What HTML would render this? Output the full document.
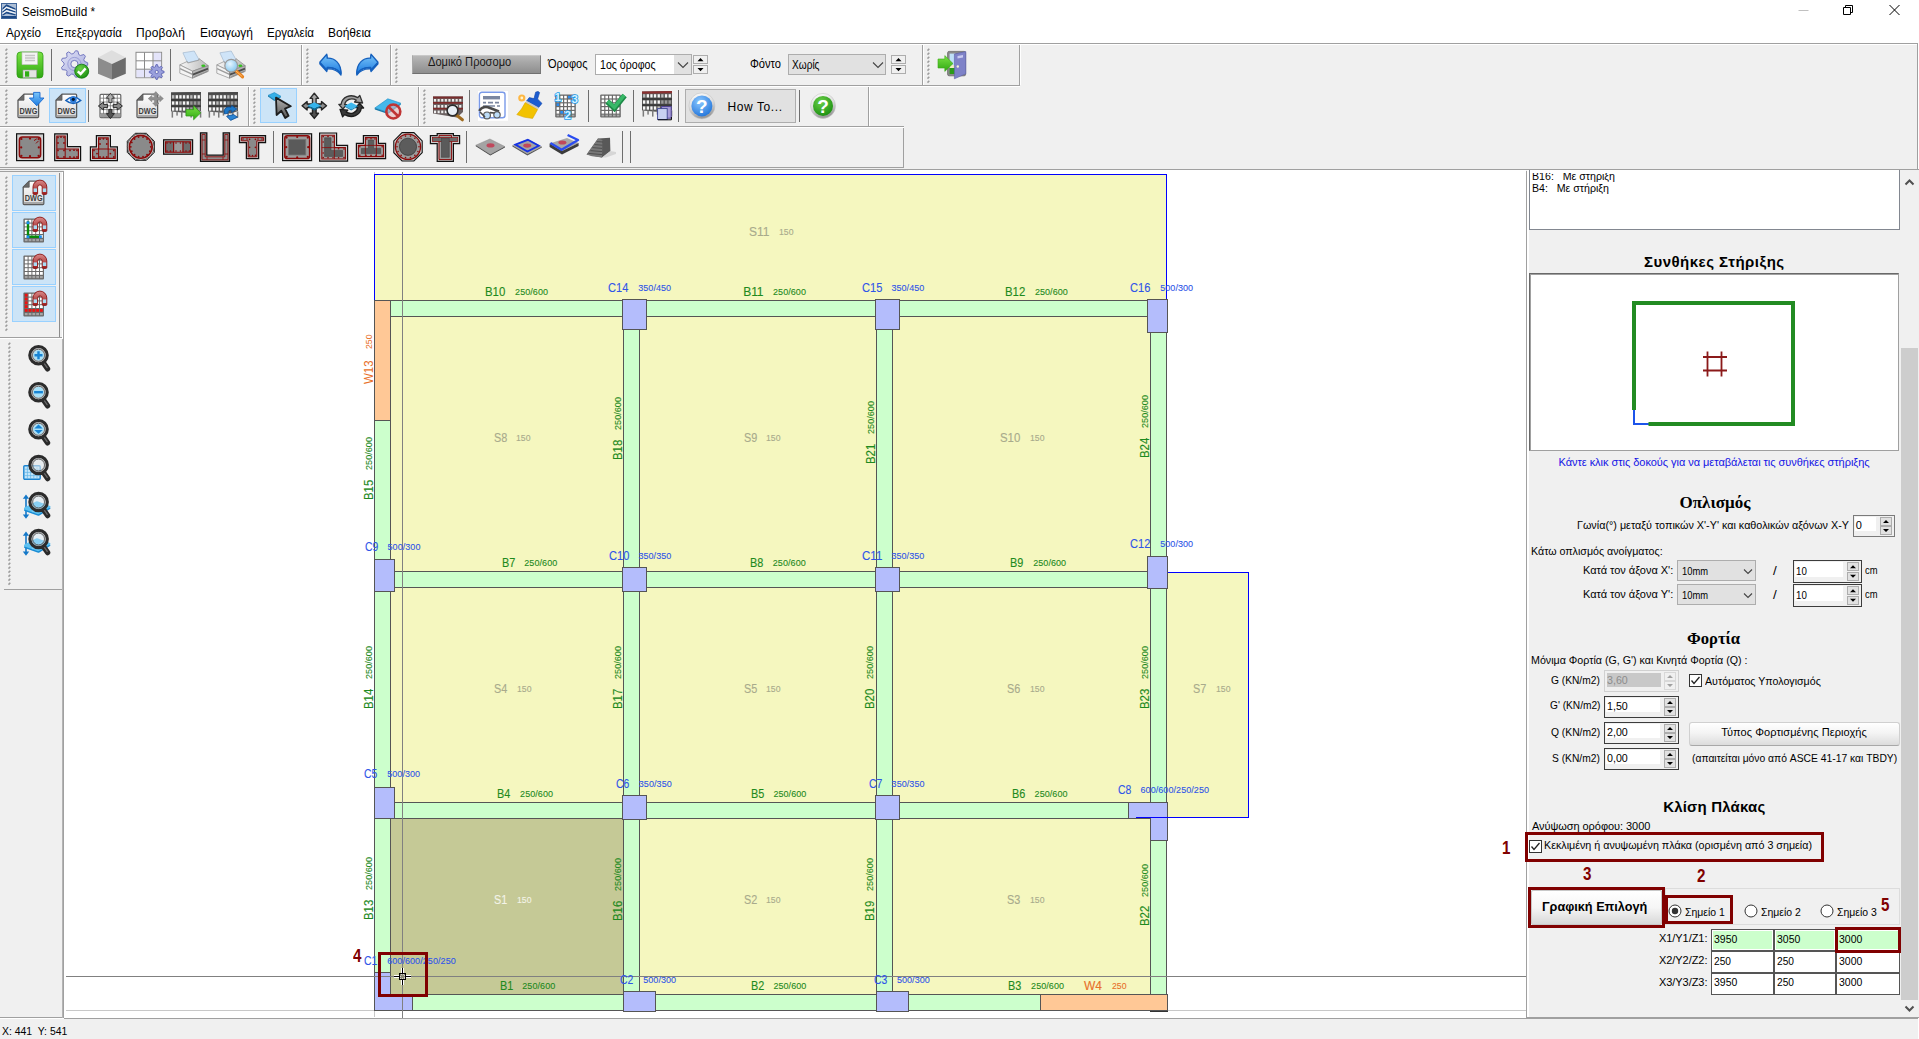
<!DOCTYPE html>
<html lang="el"><head><meta charset="utf-8"><title>SeismoBuild</title>
<style>
html,body{margin:0;padding:0}
body{width:1919px;height:1039px;overflow:hidden;background:#f0f0f0;position:relative;font-family:"Liberation Sans",sans-serif;font-size:11px;color:#000}
.a{position:absolute;box-sizing:border-box}
.t{position:absolute;white-space:pre;line-height:1;display:block}
svg{position:absolute;overflow:visible}
.tb{position:absolute;box-sizing:border-box;border-right:1px solid #a0a0a0;border-bottom:1px solid #a0a0a0;box-shadow:1px 1px 0 #fff}
.grip{position:absolute;width:3px;border-left:1px dotted #a8a8a8;border-right:1px dotted #c8c8c8}
.sep{position:absolute;width:1px;background:#a0a0a0;box-shadow:1px 0 0 #fff}
.hl{position:absolute;box-sizing:border-box;background:#cce4f7;border:1px solid #99d1ff}
.spin{position:absolute;box-sizing:border-box;background:#fff;border:1px solid #333}
.sb{position:absolute;box-sizing:border-box;background:#f0f0f0;border:1px solid #adadad}
.in{position:absolute;box-sizing:border-box;background:#fff;border:1px solid #7a7a7a}
.red{position:absolute;box-sizing:border-box;border:3px solid #800000}
</style></head>
<body>
<!-- title bar -->
<div class="a" style="left:0px;top:0px;width:1919px;height:43px;background:#fff"></div>
<svg style="left:1px;top:3px" width="16" height="16" viewBox="0 0 16 16">
<rect x="0.5" y="0.5" width="15" height="15" fill="#aebfd6" stroke="#41669a"/>
<path d="M1.5 5 L5.5 1.2 L14.5 5.4 V7 L5.5 3.4 L1.5 7 Z M1.5 8.2 L5.5 5 L14.5 8.2 V9.8 L5.5 7 L1.5 10 Z M1.5 11.2 L5.5 8.6 L14.5 11 V12.4 L5.5 10.4 L1.5 12.8 Z" fill="#1d4a87"/>
<path d="M1.5 7 L5.5 3.4 L14.5 7 V8.2 L5.5 5 L1.5 8.2 Z M1.5 10 L5.5 7 L14.5 9.8 V11 L5.5 8.6 L1.5 11.2 Z" fill="#f2f5f9"/>
<rect x="1" y="13" width="14" height="2" fill="#1d4a87"/>
</svg>
<span class="t" style="font-size:12px;color:#000;left:22px;top:5.84px;transform-origin:0 0;transform:scaleX(0.9772);">SeismoBuild *</span>
<svg style="left:1780px;top:0" width="139" height="22" viewBox="0 0 139 22">
<path d="M18.5 10.5 H28.5" stroke="#c0c0c0" stroke-width="1" fill="none"/>
<path d="M63.5 7.5 H70.5 V14.5 H63.5 Z M65.5 7.5 V5.5 H72.5 V12.5 H70.5" stroke="#000" stroke-width="1" fill="none"/>
<path d="M109.5 5 L119.5 15 M119.5 5 L109.5 15" stroke="#000" stroke-width="1" fill="none"/>
</svg>
<!-- menu -->
<span class="t" style="font-size:12px;color:#000;left:6px;top:26.84px;transform-origin:0 0;transform:scaleX(0.9769);">Αρχείο</span>
<span class="t" style="font-size:12px;color:#000;left:56px;top:26.84px;transform-origin:0 0;transform:scaleX(0.9546);">Επεξεργασία</span>
<span class="t" style="font-size:12px;color:#000;letter-spacing:0.116px;left:136px;top:26.84px;">Προβολή</span>
<span class="t" style="font-size:12px;color:#000;letter-spacing:-0.008px;left:200px;top:26.84px;">Εισαγωγή</span>
<span class="t" style="font-size:12px;color:#000;left:267px;top:26.84px;transform-origin:0 0;transform:scaleX(0.9644);">Εργαλεία</span>
<span class="t" style="font-size:12px;color:#000;left:328px;top:26.84px;">Βοήθεια</span>
<div class="a" style="left:0px;top:43px;width:1919px;height:1px;background:#a0a0a0"></div>
<div class="a" style="left:0px;top:44px;width:1919px;height:1px;background:#fff"></div>
<!-- status bar -->
<div class="a" style="left:0px;top:1019px;width:1919px;height:20px;background:#f0f0f0"></div>
<div class="a" style="left:0px;top:1018px;width:1919px;height:1px;background:#a0a0a0"></div>
<div class="a" style="left:0px;top:1018px;width:64px;height:1px;background:#fff"></div>
<span class="t" style="font-size:11px;color:#000;left:2px;top:1025.69px;transform-origin:0 0;transform:scaleX(0.9474);">X: 441  Y: 541</span>
<!-- toolbars -->
<div class="a" style="left:0px;top:85px;width:1020px;height:1px;background:#a0a0a0"></div>
<div class="a" style="left:0px;top:86px;width:1020px;height:1px;background:#fff"></div>
<div class="a" style="left:0px;top:126px;width:904px;height:1px;background:#a0a0a0"></div>
<div class="a" style="left:0px;top:127px;width:904px;height:1px;background:#fff"></div>
<div class="a" style="left:0px;top:167px;width:904px;height:1px;background:#a0a0a0"></div>
<div class="a" style="left:1917px;top:44px;width:1px;height:126px;background:#a0a0a0"></div>
<div class="a" style="left:1918px;top:22px;width:1px;height:1017px;background:#fff"></div>
<div class="a" style="left:0px;top:169px;width:1919px;height:1px;background:#a0a0a0"></div>
<div class="a" style="left:301px;top:45px;width:1px;height:41px;background:#a0a0a0"></div>
<div class="a" style="left:302px;top:45px;width:1px;height:40px;background:#fff"></div>
<div class="a" style="left:390px;top:45px;width:1px;height:41px;background:#a0a0a0"></div>
<div class="a" style="left:391px;top:45px;width:1px;height:40px;background:#fff"></div>
<div class="a" style="left:922px;top:45px;width:1px;height:41px;background:#a0a0a0"></div>
<div class="a" style="left:923px;top:45px;width:1px;height:40px;background:#fff"></div>
<div class="a" style="left:1019px;top:45px;width:1px;height:41px;background:#a0a0a0"></div>
<div class="a" style="left:1020px;top:45px;width:1px;height:40px;background:#fff"></div>
<div class="a" style="left:248px;top:87px;width:1px;height:40px;background:#a0a0a0"></div>
<div class="a" style="left:249px;top:87px;width:1px;height:39px;background:#fff"></div>
<div class="a" style="left:418px;top:87px;width:1px;height:40px;background:#a0a0a0"></div>
<div class="a" style="left:419px;top:87px;width:1px;height:39px;background:#fff"></div>
<div class="a" style="left:868px;top:87px;width:1px;height:40px;background:#a0a0a0"></div>
<div class="a" style="left:869px;top:87px;width:1px;height:39px;background:#fff"></div>
<div class="a" style="left:903px;top:128px;width:1px;height:40px;background:#a0a0a0"></div>
<svg style="left:5px;top:48px" width="4" height="35"><path d="M0.5 2.6 L2.3 0.8 M0.5 6.6 L2.3 4.8 M0.5 10.6 L2.3 8.8 M0.5 14.6 L2.3 12.8 M0.5 18.6 L2.3 16.8 M0.5 22.6 L2.3 20.8 M0.5 26.6 L2.3 24.8 M0.5 30.6 L2.3 28.8 M0.5 34.6 L2.3 32.8 " stroke="#9c9c9c" stroke-width="1.5" fill="none"/></svg>
<svg style="left:306px;top:48px" width="4" height="35"><path d="M0.5 2.6 L2.3 0.8 M0.5 6.6 L2.3 4.8 M0.5 10.6 L2.3 8.8 M0.5 14.6 L2.3 12.8 M0.5 18.6 L2.3 16.8 M0.5 22.6 L2.3 20.8 M0.5 26.6 L2.3 24.8 M0.5 30.6 L2.3 28.8 M0.5 34.6 L2.3 32.8 " stroke="#9c9c9c" stroke-width="1.5" fill="none"/></svg>
<svg style="left:395px;top:48px" width="4" height="35"><path d="M0.5 2.6 L2.3 0.8 M0.5 6.6 L2.3 4.8 M0.5 10.6 L2.3 8.8 M0.5 14.6 L2.3 12.8 M0.5 18.6 L2.3 16.8 M0.5 22.6 L2.3 20.8 M0.5 26.6 L2.3 24.8 M0.5 30.6 L2.3 28.8 M0.5 34.6 L2.3 32.8 " stroke="#9c9c9c" stroke-width="1.5" fill="none"/></svg>
<svg style="left:927px;top:48px" width="4" height="35"><path d="M0.5 2.6 L2.3 0.8 M0.5 6.6 L2.3 4.8 M0.5 10.6 L2.3 8.8 M0.5 14.6 L2.3 12.8 M0.5 18.6 L2.3 16.8 M0.5 22.6 L2.3 20.8 M0.5 26.6 L2.3 24.8 M0.5 30.6 L2.3 28.8 M0.5 34.6 L2.3 32.8 " stroke="#9c9c9c" stroke-width="1.5" fill="none"/></svg>
<svg style="left:5px;top:89px" width="4" height="35"><path d="M0.5 2.6 L2.3 0.8 M0.5 6.6 L2.3 4.8 M0.5 10.6 L2.3 8.8 M0.5 14.6 L2.3 12.8 M0.5 18.6 L2.3 16.8 M0.5 22.6 L2.3 20.8 M0.5 26.6 L2.3 24.8 M0.5 30.6 L2.3 28.8 M0.5 34.6 L2.3 32.8 " stroke="#9c9c9c" stroke-width="1.5" fill="none"/></svg>
<svg style="left:253px;top:89px" width="4" height="35"><path d="M0.5 2.6 L2.3 0.8 M0.5 6.6 L2.3 4.8 M0.5 10.6 L2.3 8.8 M0.5 14.6 L2.3 12.8 M0.5 18.6 L2.3 16.8 M0.5 22.6 L2.3 20.8 M0.5 26.6 L2.3 24.8 M0.5 30.6 L2.3 28.8 M0.5 34.6 L2.3 32.8 " stroke="#9c9c9c" stroke-width="1.5" fill="none"/></svg>
<svg style="left:423px;top:89px" width="4" height="35"><path d="M0.5 2.6 L2.3 0.8 M0.5 6.6 L2.3 4.8 M0.5 10.6 L2.3 8.8 M0.5 14.6 L2.3 12.8 M0.5 18.6 L2.3 16.8 M0.5 22.6 L2.3 20.8 M0.5 26.6 L2.3 24.8 M0.5 30.6 L2.3 28.8 M0.5 34.6 L2.3 32.8 " stroke="#9c9c9c" stroke-width="1.5" fill="none"/></svg>
<svg style="left:5px;top:130px" width="4" height="35"><path d="M0.5 2.6 L2.3 0.8 M0.5 6.6 L2.3 4.8 M0.5 10.6 L2.3 8.8 M0.5 14.6 L2.3 12.8 M0.5 18.6 L2.3 16.8 M0.5 22.6 L2.3 20.8 M0.5 26.6 L2.3 24.8 M0.5 30.6 L2.3 28.8 M0.5 34.6 L2.3 32.8 " stroke="#9c9c9c" stroke-width="1.5" fill="none"/></svg>
<div class="a" style="left:51px;top:49px;width:1px;height:32px;background:#6e6e6e"></div>
<div class="a" style="left:170px;top:49px;width:1px;height:32px;background:#6e6e6e"></div>
<div class="a" style="left:88px;top:90px;width:1px;height:32px;background:#6e6e6e"></div>
<div class="a" style="left:469px;top:90px;width:1px;height:32px;background:#6e6e6e"></div>
<div class="a" style="left:588px;top:90px;width:1px;height:32px;background:#6e6e6e"></div>
<div class="a" style="left:633px;top:90px;width:1px;height:32px;background:#6e6e6e"></div>
<div class="a" style="left:678px;top:90px;width:1px;height:32px;background:#6e6e6e"></div>
<div class="a" style="left:799px;top:90px;width:1px;height:32px;background:#6e6e6e"></div>
<div class="a" style="left:273px;top:131px;width:1px;height:32px;background:#6e6e6e"></div>
<div class="a" style="left:466px;top:131px;width:1px;height:32px;background:#6e6e6e"></div>
<div class="a" style="left:622px;top:131px;width:1px;height:32px;background:#6e6e6e"></div>
<div class="a" style="left:630px;top:131px;width:1px;height:32px;background:#6e6e6e"></div>
<div class="hl" style="left:49px;top:88px;width:37px;height:35px"></div>
<div class="hl" style="left:260px;top:88px;width:37px;height:35px"></div>
<div class="a" style="left:412px;top:55px;width:129px;height:19px;background:linear-gradient(#b8b8b8 0%,#a6a6a6 40%,#8e8e8e 100%);border-top:1px solid #c8c8c8;border-left:1px solid #a8a8a8;border-right:1px solid #787878;border-bottom:1px solid #707070"></div>
<span class="t" style="font-size:12px;color:#1a1a1a;left:428px;top:56.04px;transform-origin:0 0;transform:scaleX(0.9248);">Δομικό Προσομο</span>
<span class="t" style="font-size:12px;color:#000;left:548px;top:57.84px;transform-origin:0 0;transform:scaleX(0.9179);">Όροφος</span>
<div class="a" style="left:595px;top:54px;width:97px;height:21px;background:#fff;border:1px solid #adadad"></div>
<div class="a" style="left:674px;top:55px;width:17px;height:19px;background:#e1e1e1"></div>
<svg style="left:677px;top:61px" width="12" height="8"><path d="M1 1.5 L6 6.5 L11 1.5" stroke="#444" stroke-width="1.1" fill="none"/></svg>
<span class="t" style="font-size:12px;color:#000;left:600px;top:58.54px;transform-origin:0 0;transform:scaleX(0.8825);">1ος όροφος</span>
<div class="a" style="left:693px;top:55px;width:15px;height:9px;background:#f0f0f0;border:1px solid #adadad"></div>
<div class="a" style="left:693px;top:65px;width:15px;height:9px;background:#f0f0f0;border:1px solid #adadad"></div>
<svg style="left:693px;top:55px" width="15" height="19"><path d="M4.5 6.2 L7.5 3 L10.5 6.2 Z M4.5 13 L7.5 16.2 L10.5 13 Z" fill="#000"/></svg>
<span class="t" style="font-size:12px;color:#000;left:750px;top:57.84px;transform-origin:0 0;transform:scaleX(0.9254);">Φόντο</span>
<div class="a" style="left:788px;top:54px;width:98px;height:21px;background:#e1e1e1;border:1px solid #adadad"></div>
<svg style="left:872px;top:61px" width="12" height="8"><path d="M1 1.5 L6 6.5 L11 1.5" stroke="#444" stroke-width="1.1" fill="none"/></svg>
<span class="t" style="font-size:12px;color:#000;left:791.7px;top:58.54px;transform-origin:0 0;transform:scaleX(0.8421);">Χωρίς</span>
<div class="a" style="left:891px;top:55px;width:15px;height:9px;background:#f0f0f0;border:1px solid #adadad"></div>
<div class="a" style="left:891px;top:65px;width:15px;height:9px;background:#f0f0f0;border:1px solid #adadad"></div>
<svg style="left:891px;top:55px" width="15" height="19"><path d="M4.5 6.2 L7.5 3 L10.5 6.2 Z M4.5 13 L7.5 16.2 L10.5 13 Z" fill="#000"/></svg>
<div class="a" style="left:685px;top:89px;width:111px;height:34px;background:#e1e1e1;border:1px solid #adadad"></div>
<span class="t" style="font-size:12px;color:#000;letter-spacing:0.610px;left:727.4px;top:100.74px;">How To...</span>
<svg style="left:0;top:0" width="1100" height="170"><defs>
<linearGradient id="gGreen" x1="0" y1="0" x2="0" y2="1"><stop offset="0" stop-color="#7be244"/><stop offset="1" stop-color="#2fa812"/></linearGradient>
<linearGradient id="gBlue" x1="0" y1="0" x2="0" y2="1"><stop offset="0" stop-color="#7cc6fa"/><stop offset="1" stop-color="#1c7be0"/></linearGradient>
<linearGradient id="gDoc" x1="0" y1="0" x2="0" y2="1"><stop offset="0" stop-color="#ffffff"/><stop offset="1" stop-color="#d8d8d8"/></linearGradient>
<linearGradient id="gGray" x1="0" y1="0" x2="0" y2="1"><stop offset="0" stop-color="#b0b0b0"/><stop offset="1" stop-color="#585858"/></linearGradient>
<radialGradient id="gLens" cx="0.4" cy="0.35" r="0.7"><stop offset="0" stop-color="#e8f6ff"/><stop offset="1" stop-color="#7fc4ee"/></radialGradient>
<radialGradient id="gQb" cx="0.4" cy="0.3" r="0.8"><stop offset="0" stop-color="#8cc8ff"/><stop offset="1" stop-color="#1a6fd8"/></radialGradient>
<radialGradient id="gQg" cx="0.4" cy="0.3" r="0.8"><stop offset="0" stop-color="#6cd048"/><stop offset="1" stop-color="#138a0c"/></radialGradient>
<linearGradient id="gMag" x1="0" y1="0" x2="0" y2="1"><stop offset="0" stop-color="#d88a8a"/><stop offset="1" stop-color="#9c1c1c"/></linearGradient>
<linearGradient id="gGear" x1="0" y1="0" x2="1" y2="1"><stop offset="0" stop-color="#e0e2f6"/><stop offset="1" stop-color="#a4a8dc"/></linearGradient>
<linearGradient id="gPr" x1="0" y1="0" x2="1" y2="0"><stop offset="0" stop-color="#f8f8f8"/><stop offset="1" stop-color="#b8b8b8"/></linearGradient>
<linearGradient id="gRing" x1="0" y1="0" x2="0.3" y2="1"><stop offset="0" stop-color="#ffffff"/><stop offset="0.55" stop-color="#dcdcdc"/><stop offset="1" stop-color="#9a9a9a"/></linearGradient>
</defs><g transform="translate(14,49)"><rect x="3" y="3" width="26" height="26" rx="3.5" fill="url(#gGreen)" stroke="#2c9a12" stroke-width="0.8"/><rect x="8" y="3.4" width="15.5" height="12.2" fill="#f4f4f4" stroke="#bdbdbd" stroke-width="0.6"/><path d="M11 6.5 H21 M11 9 H21 M11 11.5 H21" stroke="#c4c4c4" stroke-width="1.3"/><rect x="9" y="21" width="13.6" height="7.6" fill="#e4e4e4" stroke="#9a9a9a" stroke-width="0.6"/><rect x="11" y="22.3" width="4.2" height="5.4" fill="#2fae14"/></g>
<g transform="translate(59,49)"><polygon points="28.7,13.8 28.7,16.2 25.4,17.7 24.8,19.4 26.4,22.7 24.9,24.5 21.4,23.5 19.8,24.4 18.9,27.9 16.6,28.3 14.5,25.4 12.7,25.0 9.7,27.1 7.7,26.0 8.0,22.4 6.9,21.0 3.3,20.7 2.5,18.5 5.0,15.9 5.0,14.1 2.5,11.5 3.3,9.3 6.9,9.0 8.0,7.6 7.7,4.0 9.7,2.9 12.7,5.0 14.5,4.6 16.6,1.7 18.9,2.1 19.8,5.6 21.4,6.5 24.9,5.5 26.4,7.3 24.8,10.6 25.4,12.3" fill="url(#gGear)" stroke="#7478c0" stroke-width="1" stroke-linejoin="round"/><circle cx="15.4" cy="15" r="6.6" fill="none" stroke="#9a9ed8" stroke-width="1"/><circle cx="15.4" cy="15" r="3.6" fill="#f0f0f0" stroke="#7478c0" stroke-width="1"/><circle cx="22.7" cy="22.2" r="7" fill="url(#gQg)" stroke="#0d7a0a" stroke-width="0.8"/><path d="M18.8 22.4 L21.6 25 L26.6 19.4" stroke="#fff" stroke-width="2.4" fill="none"/></g>
<g transform="translate(96,49)"><polygon points="15.7,1.3 29.8,8.4 16,15 2,8.4" fill="#dedede"/><polygon points="2,8.4 16,15 16,30.5 2,24.7" fill="#8c8c8c"/><polygon points="16,15 29.8,8.4 29.8,24.7 16,30.5" fill="#6c6c6c"/></g>
<g transform="translate(133,49)"><rect x="3" y="3.3" width="25.6" height="25.4" fill="#fff" stroke="#8a8a8a" stroke-width="1"/><rect x="20.6" y="3.8" width="7.5" height="24.4" fill="#e4e4fa"/><rect x="3.5" y="20.4" width="24.6" height="7.8" fill="#e4e4fa"/><path d="M11.5 3.3 V28.7 M20 3.3 V28.7 M3 11.8 H28.6 M3 20.2 H28.6" stroke="#8a8a8a" stroke-width="1"/><polygon points="31.1,22.3 31.1,23.7 28.7,24.5 28.3,25.5 29.4,27.7 28.4,28.7 26.2,27.6 25.2,28.0 24.4,30.4 23.0,30.4 22.2,28.0 21.2,27.6 19.0,28.7 18.0,27.7 19.1,25.5 18.7,24.5 16.3,23.7 16.3,22.3 18.7,21.5 19.1,20.5 18.0,18.3 19.0,17.3 21.2,18.4 22.2,18.0 23.0,15.6 24.4,15.6 25.2,18.0 26.2,18.4 28.4,17.3 29.4,18.3 28.3,20.5 28.7,21.5" fill="#9aa0dc" stroke="#555cb0" stroke-width="0.8" stroke-linejoin="round"/><circle cx="23.7" cy="23" r="1.6" fill="#f0f0f0" stroke="#555cb0" stroke-width="0.8"/></g>
<g transform="translate(178,49)"><polygon points="4.9,3.8 16.2,2 21.2,10.9 9.5,13.8" fill="#cfe4f8" stroke="#9ab0c8" stroke-width="0.6"/><polygon points="1.8,15.9 9.3,12.4 9.8,14 20.8,11.2 21,9.6 30.2,16.6 14.5,22.2" fill="url(#gPr)" stroke="#8e8e8e" stroke-width="0.7"/><polygon points="1.8,15.9 14.5,22.2 14.5,29.2 1.8,24.2" fill="#f4f4f4" stroke="#8e8e8e" stroke-width="0.7"/><polygon points="14.5,22.2 30.2,16.6 30.2,22.4 14.5,29.2" fill="#b4b4b4" stroke="#808080" stroke-width="0.7"/><path d="M2 19.6 L14.5 25.4" stroke="#9c9c9c" stroke-width="1.4" fill="none"/><path d="M14.8 25.6 L30 19.6" stroke="#4c4c4c" stroke-width="1.8" fill="none"/><path d="M16.4 27.6 L29 22.4" stroke="#8a8a8a" stroke-width="0.9" fill="none"/><ellipse cx="25.3" cy="16.7" rx="2" ry="1.2" fill="#35c020"/></g>
<g transform="translate(215,49)"><polygon points="4.9,3.8 16.2,2 21.2,10.9 9.5,13.8" fill="#cfe4f8" stroke="#9ab0c8" stroke-width="0.6"/><polygon points="1.8,15.9 9.3,12.4 9.8,14 20.8,11.2 21,9.6 30.2,16.6 14.5,22.2" fill="url(#gPr)" stroke="#8e8e8e" stroke-width="0.7"/><polygon points="1.8,15.9 14.5,22.2 14.5,29.2 1.8,24.2" fill="#f4f4f4" stroke="#8e8e8e" stroke-width="0.7"/><polygon points="14.5,22.2 30.2,16.6 30.2,22.4 14.5,29.2" fill="#b4b4b4" stroke="#808080" stroke-width="0.7"/><path d="M2 19.6 L14.5 25.4" stroke="#9c9c9c" stroke-width="1.4" fill="none"/><path d="M14.8 25.6 L30 19.6" stroke="#4c4c4c" stroke-width="1.8" fill="none"/><path d="M16.4 27.6 L29 22.4" stroke="#8a8a8a" stroke-width="0.9" fill="none"/><ellipse cx="25.3" cy="16.7" rx="2" ry="1.2" fill="#35c020"/></g>
<g transform="translate(215,49)"><path d="M19.5 20.5 L27.5 27.8" stroke="#e8801c" stroke-width="3.2" stroke-linecap="round"/><path d="M20.5 21.5 L27 27.3" stroke="#ffc070" stroke-width="1" stroke-linecap="round"/><circle cx="16.2" cy="16.7" r="6.4" fill="url(#gLens)" stroke="#9a9a9a" stroke-width="1.2"/></g>
<g transform="translate(319.8,54)"><path d="M0 8.2 L7 0.2 L7.4 4.2 C15 3.8 21.4 9.2 21.2 19.6 C17.6 14.6 14 13 7.4 13.4 L7 16 Z" transform="translate(0,1.5)" fill="#1560bd" stroke="#1560bd" stroke-width="1.3" stroke-linejoin="round"/><path d="M0 8.2 L7 0.2 L7.4 4.2 C15 3.8 21.4 9.2 21.2 19.6 C17.6 14.6 14 13 7.4 13.4 L7 16 Z" fill="url(#gBlue)" stroke="#1560bd" stroke-width="1.3" stroke-linejoin="round"/></g>
<g transform="translate(378,54) scale(-1,1)"><path d="M0 8.2 L7 0.2 L7.4 4.2 C15 3.8 21.4 9.2 21.2 19.6 C17.6 14.6 14 13 7.4 13.4 L7 16 Z" transform="translate(0,1.5)" fill="#1560bd" stroke="#1560bd" stroke-width="1.3" stroke-linejoin="round"/><path d="M0 8.2 L7 0.2 L7.4 4.2 C15 3.8 21.4 9.2 21.2 19.6 C17.6 14.6 14 13 7.4 13.4 L7 16 Z" fill="url(#gBlue)" stroke="#1560bd" stroke-width="1.3" stroke-linejoin="round"/></g>
<g transform="translate(936,49)"><rect x="11.6" y="2.4" width="18" height="24.4" rx="1.5" fill="#8a8a8a" stroke="#6a6a6a" stroke-width="0.8"/><rect x="13.6" y="4.6" width="6" height="12" fill="#bfe0f8"/><rect x="13.6" y="16" width="6" height="3" fill="#f0f0c0"/><rect x="13.6" y="19" width="6" height="6" fill="#2a9a18"/><polygon points="18.4,5 29.8,2.6 29.8,24.8 18.4,29.8" fill="#7e82c8" stroke="#5a5ea8" stroke-width="0.6"/><rect x="21.5" y="6.5" width="5.5" height="2.6" fill="#c8caf0" transform="skewY(-10) translate(0,4.2)"/><circle cx="21.8" cy="17.5" r="1.2" fill="#f4f0d8"/><polygon points="2,10 8.8,10 8.8,6.6 17,14.5 8.8,22.4 8.8,19 2,19" fill="url(#gGreen)" stroke="#3aa818" stroke-width="0.6"/></g>
<g transform="translate(14,90)"><path d="M10 4.2 H23.6 Q24.6 4.2 24.6 5.2 V26.6 Q24.6 27.6 23.6 27.6 H5 Q4 27.6 4 26.6 V10.2 Z" fill="url(#gDoc)" stroke="#5a5a5a" stroke-width="1.3" stroke-linejoin="round"/><path d="M10 4.2 V10.2 H4 Z" fill="#6a6a6a" stroke="#5a5a5a" stroke-width="0.8" stroke-linejoin="round"/><rect x="4.7" y="25" width="19.2" height="2" fill="#a8a8a8"/><text x="14.5" y="23.6" font-family="Liberation Sans, sans-serif" font-size="9.6" font-weight="bold" text-anchor="middle" fill="#3e3e3e" textLength="17.8" lengthAdjust="spacingAndGlyphs">DWG</text></g>
<g transform="translate(14,90)"><path d="M19.6 2.4 H26 V8 H30 L22.8 15.8 L15.4 8 H19.6 Z" fill="url(#gBlue)" stroke="#1a6ad0" stroke-width="0.9" stroke-linejoin="round"/></g>
<g transform="translate(52,90)"><path d="M10 4.2 H23.6 Q24.6 4.2 24.6 5.2 V26.6 Q24.6 27.6 23.6 27.6 H5 Q4 27.6 4 26.6 V10.2 Z" fill="url(#gDoc)" stroke="#5a5a5a" stroke-width="1.3" stroke-linejoin="round"/><path d="M10 4.2 V10.2 H4 Z" fill="#6a6a6a" stroke="#5a5a5a" stroke-width="0.8" stroke-linejoin="round"/><rect x="4.7" y="25" width="19.2" height="2" fill="#a8a8a8"/><text x="14.5" y="23.6" font-family="Liberation Sans, sans-serif" font-size="9.6" font-weight="bold" text-anchor="middle" fill="#3e3e3e" textLength="17.8" lengthAdjust="spacingAndGlyphs">DWG</text></g>
<g transform="translate(52,90)"><path d="M13.8 10.4 Q21.3 3.4 28.8 10.4 Q21.3 16.6 13.8 10.4 Z" fill="#e8f4ff" stroke="#1560b8" stroke-width="1.4"/><circle cx="21.3" cy="9.6" r="3.4" fill="#2a7ad8"/><circle cx="21.3" cy="9.3" r="1.6" fill="#061830"/></g>
<g transform="translate(94,90)"><rect x="6" y="4.4" width="20.8" height="23.2" rx="1" fill="#fff" stroke="#666" stroke-width="1.2"/><path d="M9.5 4.4 V27.6 M13 4.4 V27.6 M16.4 4.4 V27.6 M19.8 4.4 V27.6 M23.3 4.4 V27.6 M6 8.2 H26.8 M6 12 H26.8 M6 15.8 H26.8 M6 19.6 H26.8 M6 23.4 H26.8" stroke="#777" stroke-width="0.8"/><rect x="6.5" y="24" width="19.8" height="3.2" fill="#9a9a9a"/><path d="M16.4 3.4 L20.4 8.2 H18 V12.6 H14.8 V8.2 H12.4 Z" fill="#b0b0b0" stroke="#3a3a3a" stroke-width="1"/><path d="M16.4 28.6 L20.4 23.6 H18 V19.4 H14.8 V23.6 H12.4 Z" fill="#555" stroke="#2a2a2a" stroke-width="1"/><path d="M4.4 16 L9.6 12 V14.4 H13.6 V17.6 H9.6 V20 Z" fill="#8a8a8a" stroke="#2a2a2a" stroke-width="1"/><path d="M28.4 16 L23.2 12 V14.4 H19.2 V17.6 H23.2 V20 Z" fill="#8a8a8a" stroke="#2a2a2a" stroke-width="1"/></g>
<g transform="translate(133,90)"><path d="M10 4.2 H23.6 Q24.6 4.2 24.6 5.2 V26.6 Q24.6 27.6 23.6 27.6 H5 Q4 27.6 4 26.6 V10.2 Z" fill="url(#gDoc)" stroke="#5a5a5a" stroke-width="1.3" stroke-linejoin="round"/><path d="M10 4.2 V10.2 H4 Z" fill="#6a6a6a" stroke="#5a5a5a" stroke-width="0.8" stroke-linejoin="round"/><rect x="4.7" y="25" width="19.2" height="2" fill="#a8a8a8"/><text x="14.5" y="23.6" font-family="Liberation Sans, sans-serif" font-size="9.6" font-weight="bold" text-anchor="middle" fill="#3e3e3e" textLength="17.8" lengthAdjust="spacingAndGlyphs">DWG</text></g>
<g transform="translate(133,90)"><path d="M22.8 1.6 L26 5.2 H24.2 V7.2 H26.8 V5.4 L30.4 8.6 L26.8 11.8 V10 H24.2 V13 H26 L22.8 16.4 L19.6 13 H21.4 V10 H18.8 V11.8 L15.2 8.6 L18.8 5.4 V7.2 H21.4 V5.2 H19.6 Z" fill="#8e8e8e" stroke="#7a7a7a" stroke-width="0.5"/></g>
<g transform="translate(171,92)"><polygon points="0,0.6 30,0 30,19 23,21.4 0,19.6" fill="#585858"/><polygon points="0,0.6 30,0 30,2.2 0,2.8" fill="#4a4a4a"/><rect x="1.0" y="3.2" width="2.3" height="3.3" fill="#bdbdbd"/><rect x="4.7" y="3.2" width="2.3" height="3.3" fill="#f6f6f6"/><rect x="8.3" y="3.2" width="2.3" height="3.3" fill="#f6f6f6"/><rect x="11.9" y="3.2" width="2.3" height="3.3" fill="#f6f6f6"/><rect x="15.6" y="3.2" width="2.3" height="3.3" fill="#f6f6f6"/><rect x="19.2" y="3.2" width="2.3" height="3.3" fill="#bdbdbd"/><rect x="22.9" y="3.2" width="2.3" height="3.3" fill="#f6f6f6"/><rect x="26.6" y="3.2" width="2.3" height="3.3" fill="#f6f6f6"/><rect x="1.0" y="9.4" width="2.3" height="3.3" fill="#f6f6f6"/><rect x="4.7" y="9.4" width="2.3" height="3.3" fill="#f6f6f6"/><rect x="8.3" y="9.4" width="2.3" height="3.3" fill="#bdbdbd"/><rect x="11.9" y="9.4" width="2.3" height="3.3" fill="#f6f6f6"/><rect x="15.6" y="9.4" width="2.3" height="3.3" fill="#f6f6f6"/><rect x="19.2" y="9.4" width="2.3" height="3.3" fill="#9a9a9a"/><rect x="22.9" y="9.4" width="2.3" height="3.3" fill="#9a9a9a"/><rect x="26.6" y="9.4" width="2.3" height="3.3" fill="#9a9a9a"/><rect x="1.0" y="15.4" width="2.3" height="3.3" fill="#f6f6f6"/><rect x="4.7" y="15.4" width="2.3" height="3.3" fill="#f6f6f6"/><rect x="8.3" y="15.4" width="2.3" height="3.3" fill="#f6f6f6"/><rect x="11.9" y="15.4" width="2.3" height="3.3" fill="#f6f6f6"/><rect x="15.6" y="15.4" width="2.3" height="3.3" fill="#bdbdbd"/><rect x="19.2" y="15.4" width="2.3" height="3.3" fill="#9a9a9a"/><rect x="22.9" y="15.4" width="2.3" height="3.3" fill="#9a9a9a"/><rect x="26.6" y="15.4" width="2.3" height="3.3" fill="#9a9a9a"/><path d="M0 8 H30 M0 14.2 H30" stroke="#3a3a3a" stroke-width="1.8"/><rect x="0.6" y="19.4" width="1.5" height="6.2" fill="#7c7c7c"/><rect x="5.3" y="19.4" width="1.5" height="4.2" fill="#7c7c7c"/><rect x="10.0" y="19.4" width="1.5" height="6.2" fill="#7c7c7c"/><rect x="14.7" y="19.4" width="1.5" height="4.2" fill="#7c7c7c"/><rect x="19.4" y="19.4" width="1.5" height="6.2" fill="#7c7c7c"/><rect x="24.1" y="19.4" width="1.5" height="4.2" fill="#7c7c7c"/><rect x="28.8" y="19.4" width="1.5" height="6.2" fill="#7c7c7c"/></g>
<g transform="translate(171,90)"><polygon points="15,19.6 22.6,19.6 22.6,15.8 29.8,22.8 22.6,29.8 22.6,26 15,26" fill="url(#gGreen)" stroke="#2a9a12" stroke-width="0.7"/></g>
<g transform="translate(208,92)"><polygon points="0,0.6 30,0 30,19 23,21.4 0,19.6" fill="#585858"/><polygon points="0,0.6 30,0 30,2.2 0,2.8" fill="#4a4a4a"/><rect x="1.0" y="3.2" width="2.3" height="3.3" fill="#bdbdbd"/><rect x="4.7" y="3.2" width="2.3" height="3.3" fill="#f6f6f6"/><rect x="8.3" y="3.2" width="2.3" height="3.3" fill="#f6f6f6"/><rect x="11.9" y="3.2" width="2.3" height="3.3" fill="#f6f6f6"/><rect x="15.6" y="3.2" width="2.3" height="3.3" fill="#f6f6f6"/><rect x="19.2" y="3.2" width="2.3" height="3.3" fill="#bdbdbd"/><rect x="22.9" y="3.2" width="2.3" height="3.3" fill="#f6f6f6"/><rect x="26.6" y="3.2" width="2.3" height="3.3" fill="#f6f6f6"/><rect x="1.0" y="9.4" width="2.3" height="3.3" fill="#f6f6f6"/><rect x="4.7" y="9.4" width="2.3" height="3.3" fill="#f6f6f6"/><rect x="8.3" y="9.4" width="2.3" height="3.3" fill="#bdbdbd"/><rect x="11.9" y="9.4" width="2.3" height="3.3" fill="#f6f6f6"/><rect x="15.6" y="9.4" width="2.3" height="3.3" fill="#f6f6f6"/><rect x="19.2" y="9.4" width="2.3" height="3.3" fill="#9a9a9a"/><rect x="22.9" y="9.4" width="2.3" height="3.3" fill="#9a9a9a"/><rect x="26.6" y="9.4" width="2.3" height="3.3" fill="#9a9a9a"/><rect x="1.0" y="15.4" width="2.3" height="3.3" fill="#f6f6f6"/><rect x="4.7" y="15.4" width="2.3" height="3.3" fill="#f6f6f6"/><rect x="8.3" y="15.4" width="2.3" height="3.3" fill="#f6f6f6"/><rect x="11.9" y="15.4" width="2.3" height="3.3" fill="#f6f6f6"/><rect x="15.6" y="15.4" width="2.3" height="3.3" fill="#bdbdbd"/><rect x="19.2" y="15.4" width="2.3" height="3.3" fill="#9a9a9a"/><rect x="22.9" y="15.4" width="2.3" height="3.3" fill="#9a9a9a"/><rect x="26.6" y="15.4" width="2.3" height="3.3" fill="#9a9a9a"/><path d="M0 8 H30 M0 14.2 H30" stroke="#3a3a3a" stroke-width="1.8"/><rect x="0.6" y="19.4" width="1.5" height="6.2" fill="#7c7c7c"/><rect x="5.3" y="19.4" width="1.5" height="4.2" fill="#7c7c7c"/><rect x="10.0" y="19.4" width="1.5" height="6.2" fill="#7c7c7c"/><rect x="14.7" y="19.4" width="1.5" height="4.2" fill="#7c7c7c"/><rect x="19.4" y="19.4" width="1.5" height="6.2" fill="#7c7c7c"/><rect x="24.1" y="19.4" width="1.5" height="4.2" fill="#7c7c7c"/><rect x="28.8" y="19.4" width="1.5" height="6.2" fill="#7c7c7c"/></g>
<g transform="translate(208,90)"><path d="M16.5 24 C15 18 19.5 16.2 23 17.4 L23.6 15.6 L28.8 19 L23.6 22.6 L23.8 20.4 C21.6 19.8 19.8 20.6 20.2 23.2 Z" fill="#1c78c8" stroke="#0c4c94" stroke-width="0.8"/><path d="M18.6 26.2 L25.6 24.6 L29.6 27.2 L22.6 30.4 Z" fill="#2a84d4" stroke="#0c4c94" stroke-width="0.8"/></g>
<g transform="translate(262,90)"><polygon points="6,5.4 12.4,2.6 18.8,6.2 12.4,9.8" fill="#36b0e8" stroke="#1a86c0" stroke-width="0.6"/><polygon points="6,5.4 12.4,9.8 12.4,11 6,6.6" fill="#1678a8"/><polygon points="12.4,9.8 18.8,6.2 18.8,7.4 12.4,11" fill="#1c8ac0"/><path d="M14 7.6 L28.8 16.2 L23 18.6 L26.6 25.8 L23.2 28 L19.4 20.8 L14.6 25 Z" fill="url(#gGray)" stroke="#1e1e1e" stroke-width="1.8" stroke-linejoin="round"/></g>
<g transform="translate(314.3,105.8)"><path d="M0 -12.6 L4.2 -7.4 H1.8 V-2 H-1.8 V-7.4 H-4.2 Z" fill="#a8a8a8" stroke="#2c2c2c" stroke-width="1.4" stroke-linejoin="round"/><path d="M0 12.6 L4.2 7.4 H1.8 V2 H-1.8 V7.4 H-4.2 Z" fill="#505050" stroke="#222" stroke-width="1.4" stroke-linejoin="round"/><path d="M-12.2 0 L-7.2 -4.2 V-1.8 H-2 V1.8 H-7.2 V4.2 Z" fill="#8c8c8c" stroke="#222" stroke-width="1.4" stroke-linejoin="round"/><path d="M12.2 0 L7.2 -4.2 V-1.8 H2 V1.8 H7.2 V4.2 Z" fill="#8c8c8c" stroke="#222" stroke-width="1.4" stroke-linejoin="round"/><polygon points="-6.4,-0.4 0,-3.6 6.4,-0.4 0,3" fill="#34b4ec"/><polygon points="-6.4,-0.4 0,3 6.4,-0.4 6.4,1 0,4.6 -6.4,1" fill="#0c6c98"/></g>
<g transform="translate(351.2,106)"><path d="M-10.2 -1.6 C-9 -9 -1 -12.6 6.6 -8.4 L8.6 -10.6 L11.4 -3 L3.4 -4 L5 -6 C0 -8.6 -5.6 -6.6 -6.6 -1.4 L-4.4 -1.4 L-8.4 3 L-12.4 -1.6 Z" fill="#a0a0a0" stroke="#303030" stroke-width="1.3" stroke-linejoin="round"/><path d="M10.2 2 C9 9.4 1 12.8 -6.6 8.6 L-8.6 10.8 L-11.2 3.4 L-3.4 4.2 L-5 6.2 C0 8.8 5.6 6.8 6.6 1.6 L4.4 1.6 L8.4 -2.8 L12.4 2 Z" fill="#3a3a3a" stroke="#1c1c1c" stroke-width="1.3" stroke-linejoin="round"/><polygon points="-6.4,-0.2 0,-3.4 6.4,-0.2 0,3.2" fill="#3cb8ee"/><polygon points="-6.4,-0.2 0,3.2 6.4,-0.2 6.4,0.8 0,4.4 -6.4,0.8" fill="#1a86b8"/></g>
<g transform="translate(374,90)"><polygon points="0.8,18 13.8,8.8 26.8,13.2 14,22.4" fill="#44b8ec" stroke="#1a8cc4" stroke-width="0.6"/><polygon points="0.8,18 14,22.4 14,24 0.8,19.6" fill="#1a7aa8"/><polygon points="14,22.4 26.8,13.2 26.8,14.8 14,24" fill="#1e8cc0"/><circle cx="19.3" cy="21.5" r="7" fill="#e8b4b4" fill-opacity="0.55" stroke="#c03434" stroke-width="2.6"/><path d="M14.4 16.8 L24.2 26.2" stroke="#c03434" stroke-width="2.6"/></g>
<g transform="translate(433,94)"><polygon points="0,2.5 30,2.5 30,18 24,23.4 0,19.4" fill="#6a6060"/><rect x="0" y="2.5" width="30" height="2" fill="#7a2c2c"/><path d="M0 8.8 H30 M0 14.6 H30" stroke="#7c2a2a" stroke-width="1.8"/><rect x="1.0" y="5" width="2.1" height="2.6" fill="#eee"/><rect x="1.0" y="11" width="2.1" height="2.6" fill="#eee"/><rect x="1.0" y="16.6" width="2.1" height="2.6" fill="#eee"/><rect x="4.6" y="5" width="2.1" height="2.6" fill="#eee"/><rect x="4.6" y="11" width="2.1" height="2.6" fill="#eee"/><rect x="4.6" y="16.6" width="2.1" height="2.6" fill="#eee"/><rect x="8.2" y="5" width="2.1" height="2.6" fill="#eee"/><rect x="8.2" y="11" width="2.1" height="2.6" fill="#eee"/><rect x="8.2" y="16.6" width="2.1" height="2.6" fill="#eee"/><rect x="11.8" y="5" width="2.1" height="2.6" fill="#eee"/><rect x="11.8" y="11" width="2.1" height="2.6" fill="#eee"/><rect x="11.8" y="16.6" width="2.1" height="2.6" fill="#eee"/><rect x="15.4" y="5" width="2.1" height="2.6" fill="#eee"/><rect x="15.4" y="11" width="2.1" height="2.6" fill="#eee"/><rect x="19.0" y="5" width="2.1" height="2.6" fill="#eee"/><rect x="19.0" y="11" width="2.1" height="2.6" fill="#eee"/><rect x="22.6" y="5" width="2.1" height="2.6" fill="#eee"/><rect x="22.6" y="11" width="2.1" height="2.6" fill="#eee"/><rect x="26.2" y="5" width="2.1" height="2.6" fill="#eee"/><rect x="26.2" y="11" width="2.1" height="2.6" fill="#eee"/><path d="M23 20.8 L29.4 25.8" stroke="#a06c20" stroke-width="3" stroke-linecap="round"/><circle cx="19.5" cy="16.5" r="5.4" fill="#e8eef4" stroke="#2c2c2c" stroke-width="1.6"/></g>
<g transform="translate(478,91)"><rect x="0" y="0" width="30" height="29.8" fill="#fff"/><rect x="1.4" y="1.2" width="25.6" height="25.6" rx="2.5" fill="#fff" stroke="#7a9ae8" stroke-width="1.4"/><rect x="5" y="5" width="17" height="3.4" fill="#7a86a0"/><path d="M5 11.6 H8 M10 11.6 H15 M17 11.6 H21 M5 15 H17 M19 15 H22" stroke="#7a86a0" stroke-width="1.6"/><path d="M1.4 20 C3 16 8 15 12 17 L21 20.4" stroke="#4a4a4a" stroke-width="2.6" fill="none"/><circle cx="9" cy="24.4" r="3.4" fill="#bcdcf8" stroke="#5a5a5a" stroke-width="1.2"/><circle cx="19" cy="23.8" r="3.2" fill="#bcdcf8" stroke="#5a5a5a" stroke-width="1.2"/><path d="M2 21 L7 26 M12 21.6 L16.4 22" stroke="#4a4a4a" stroke-width="1.6"/></g>
<g transform="translate(516,91)"><path d="M19.6 1.2 Q22.4 -0.6 23.6 1.6 L21.6 8 L26 12.4 L22.4 16.8 L10.6 10 L13.2 6.6 L18 7.6 Z" fill="#1c5cd0" stroke="#1448a8" stroke-width="0.6"/><path d="M10 10.6 L22.2 17.4" stroke="#c8c8c8" stroke-width="1.8"/><path d="M9.2 11.6 L21.6 18.6 L16.6 27.4 Q8 27 0.8 23.6 Q6 18.4 9.2 11.6 Z" fill="#f2c200" stroke="#d8a400" stroke-width="0.6"/><circle cx="5.8" cy="7" r="3.6" fill="#ffb030" fill-opacity="0.9"/><circle cx="5.8" cy="7" r="1.4" fill="#fff4d0"/></g>
<g transform="translate(555,94)"><rect x="0.2" y="0.4" width="20.6" height="23" rx="1.2" fill="#6a6a6a"/><rect x="1.6" y="1.8" width="2.6" height="2.6" fill="#fff"/><rect x="5.4" y="1.8" width="2.6" height="2.6" fill="#fff"/><rect x="9.2" y="1.8" width="2.6" height="2.6" fill="#fff"/><rect x="13.0" y="1.8" width="2.6" height="2.6" fill="#2a8cf0"/><rect x="16.8" y="1.8" width="2.6" height="2.6" fill="#fff"/><rect x="1.6" y="5.6" width="2.6" height="2.6" fill="#fff"/><rect x="5.4" y="5.6" width="2.6" height="2.6" fill="#fff"/><rect x="9.2" y="5.6" width="2.6" height="2.6" fill="#fff"/><rect x="13.0" y="5.6" width="2.6" height="2.6" fill="#fff"/><rect x="16.8" y="5.6" width="2.6" height="2.6" fill="#fff"/><rect x="1.6" y="9.4" width="2.6" height="2.6" fill="#2a8cf0"/><rect x="5.4" y="9.4" width="2.6" height="2.6" fill="#fff"/><rect x="9.2" y="9.4" width="2.6" height="2.6" fill="#fff"/><rect x="13.0" y="9.4" width="2.6" height="2.6" fill="#fff"/><rect x="16.8" y="9.4" width="2.6" height="2.6" fill="#fff"/><rect x="1.6" y="13.2" width="2.6" height="2.6" fill="#fff"/><rect x="5.4" y="13.2" width="2.6" height="2.6" fill="#fff"/><rect x="9.2" y="13.2" width="2.6" height="2.6" fill="#fff"/><rect x="13.0" y="13.2" width="2.6" height="2.6" fill="#fff"/><rect x="16.8" y="13.2" width="2.6" height="2.6" fill="#fff"/><rect x="1.6" y="17.0" width="2.6" height="2.6" fill="#fff"/><rect x="5.4" y="17.0" width="2.6" height="2.6" fill="#2a8cf0"/><rect x="9.2" y="17.0" width="2.6" height="2.6" fill="#fff"/><rect x="13.0" y="17.0" width="2.6" height="2.6" fill="#fff"/><rect x="16.8" y="17.0" width="2.6" height="2.6" fill="#fff"/><rect x="1.6" y="20.6" width="2.6" height="1.8" fill="#a8a8a8"/><rect x="5.4" y="20.6" width="2.6" height="1.8" fill="#a8a8a8"/><rect x="9.2" y="20.6" width="2.6" height="1.8" fill="#a8a8a8"/><rect x="13.0" y="20.6" width="2.6" height="1.8" fill="#a8a8a8"/><rect x="16.8" y="20.6" width="2.6" height="1.8" fill="#a8a8a8"/></g>
<g><text x="554.6" y="101.4" font-family="Liberation Sans, sans-serif" font-weight="bold" font-size="11.5" fill="#d8f0ff" stroke="#1c9cec" stroke-width="1.6" paint-order="stroke">1</text><text x="571.6" y="102.6" font-family="Liberation Sans, sans-serif" font-weight="bold" font-size="11.5" fill="#d8f0ff" stroke="#1c9cec" stroke-width="1.6" paint-order="stroke">3</text><text x="564.6" y="119.4" font-family="Liberation Sans, sans-serif" font-weight="bold" font-size="11.5" fill="#d8f0ff" stroke="#1c9cec" stroke-width="1.6" paint-order="stroke">2</text></g>
<g transform="translate(600,94)"><rect x="0.2" y="0.4" width="20.6" height="23" rx="1.2" fill="#6a6a6a"/><rect x="1.6" y="1.8" width="2.6" height="2.6" fill="#fff"/><rect x="5.4" y="1.8" width="2.6" height="2.6" fill="#fff"/><rect x="9.2" y="1.8" width="2.6" height="2.6" fill="#fff"/><rect x="13.0" y="1.8" width="2.6" height="2.6" fill="#fff"/><rect x="16.8" y="1.8" width="2.6" height="2.6" fill="#fff"/><rect x="1.6" y="5.6" width="2.6" height="2.6" fill="#fff"/><rect x="5.4" y="5.6" width="2.6" height="2.6" fill="#fff"/><rect x="9.2" y="5.6" width="2.6" height="2.6" fill="#fff"/><rect x="13.0" y="5.6" width="2.6" height="2.6" fill="#fff"/><rect x="16.8" y="5.6" width="2.6" height="2.6" fill="#fff"/><rect x="1.6" y="9.4" width="2.6" height="2.6" fill="#fff"/><rect x="5.4" y="9.4" width="2.6" height="2.6" fill="#fff"/><rect x="9.2" y="9.4" width="2.6" height="2.6" fill="#fff"/><rect x="13.0" y="9.4" width="2.6" height="2.6" fill="#fff"/><rect x="16.8" y="9.4" width="2.6" height="2.6" fill="#fff"/><rect x="1.6" y="13.2" width="2.6" height="2.6" fill="#fff"/><rect x="5.4" y="13.2" width="2.6" height="2.6" fill="#fff"/><rect x="9.2" y="13.2" width="2.6" height="2.6" fill="#fff"/><rect x="13.0" y="13.2" width="2.6" height="2.6" fill="#fff"/><rect x="16.8" y="13.2" width="2.6" height="2.6" fill="#fff"/><rect x="1.6" y="17.0" width="2.6" height="2.6" fill="#fff"/><rect x="5.4" y="17.0" width="2.6" height="2.6" fill="#fff"/><rect x="9.2" y="17.0" width="2.6" height="2.6" fill="#fff"/><rect x="13.0" y="17.0" width="2.6" height="2.6" fill="#fff"/><rect x="16.8" y="17.0" width="2.6" height="2.6" fill="#fff"/><rect x="1.6" y="20.6" width="2.6" height="1.8" fill="#a8a8a8"/><rect x="5.4" y="20.6" width="2.6" height="1.8" fill="#a8a8a8"/><rect x="9.2" y="20.6" width="2.6" height="1.8" fill="#a8a8a8"/><rect x="13.0" y="20.6" width="2.6" height="1.8" fill="#a8a8a8"/><rect x="16.8" y="20.6" width="2.6" height="1.8" fill="#a8a8a8"/></g>
<g transform="translate(600,90)"><path d="M7.4 11.6 L14.4 18.2 L24.6 5.6" stroke="#1e8a48" stroke-width="5.6" fill="none" stroke-linejoin="miter"/><path d="M7.6 11 L14.4 17.2 L24.2 5.2" stroke="#38b868" stroke-width="3.4" fill="none"/></g>
<g transform="translate(642,91)"><polygon points="0,0.6 30,0 30,19 23,21.4 0,19.6" fill="#585858"/><polygon points="0,0.6 30,0 30,2.2 0,2.8" fill="#8a3030"/><rect x="1.0" y="3.2" width="2.3" height="3.3" fill="#bdbdbd"/><rect x="4.7" y="3.2" width="2.3" height="3.3" fill="#f6f6f6"/><rect x="8.3" y="3.2" width="2.3" height="3.3" fill="#f6f6f6"/><rect x="11.9" y="3.2" width="2.3" height="3.3" fill="#f6f6f6"/><rect x="15.6" y="3.2" width="2.3" height="3.3" fill="#f6f6f6"/><rect x="19.2" y="3.2" width="2.3" height="3.3" fill="#bdbdbd"/><rect x="22.9" y="3.2" width="2.3" height="3.3" fill="#f6f6f6"/><rect x="26.6" y="3.2" width="2.3" height="3.3" fill="#f6f6f6"/><rect x="1.0" y="9.4" width="2.3" height="3.3" fill="#f6f6f6"/><rect x="4.7" y="9.4" width="2.3" height="3.3" fill="#f6f6f6"/><rect x="8.3" y="9.4" width="2.3" height="3.3" fill="#bdbdbd"/><rect x="11.9" y="9.4" width="2.3" height="3.3" fill="#f6f6f6"/><rect x="15.6" y="9.4" width="2.3" height="3.3" fill="#f6f6f6"/><rect x="19.2" y="9.4" width="2.3" height="3.3" fill="#9a9a9a"/><rect x="22.9" y="9.4" width="2.3" height="3.3" fill="#9a9a9a"/><rect x="26.6" y="9.4" width="2.3" height="3.3" fill="#9a9a9a"/><rect x="1.0" y="15.4" width="2.3" height="3.3" fill="#f6f6f6"/><rect x="4.7" y="15.4" width="2.3" height="3.3" fill="#f6f6f6"/><rect x="8.3" y="15.4" width="2.3" height="3.3" fill="#f6f6f6"/><rect x="11.9" y="15.4" width="2.3" height="3.3" fill="#f6f6f6"/><rect x="15.6" y="15.4" width="2.3" height="3.3" fill="#bdbdbd"/><rect x="19.2" y="15.4" width="2.3" height="3.3" fill="#9a9a9a"/><rect x="22.9" y="15.4" width="2.3" height="3.3" fill="#9a9a9a"/><rect x="26.6" y="15.4" width="2.3" height="3.3" fill="#9a9a9a"/><path d="M0 8 H30 M0 14.2 H30" stroke="#3a3a3a" stroke-width="1.8"/><rect x="0.6" y="19.4" width="1.5" height="6.2" fill="#7c7c7c"/><rect x="5.3" y="19.4" width="1.5" height="4.2" fill="#7c7c7c"/><rect x="10.0" y="19.4" width="1.5" height="6.2" fill="#7c7c7c"/><rect x="14.7" y="19.4" width="1.5" height="4.2" fill="#7c7c7c"/><rect x="19.4" y="19.4" width="1.5" height="6.2" fill="#7c7c7c"/><rect x="24.1" y="19.4" width="1.5" height="4.2" fill="#7c7c7c"/><rect x="28.8" y="19.4" width="1.5" height="6.2" fill="#7c7c7c"/></g>
<g transform="translate(642,90)"><rect x="19.6" y="16.6" width="9.6" height="11.6" fill="#a89cd8" stroke="#4a3c94" stroke-width="0.9"/><rect x="15.6" y="18.6" width="9.6" height="11" fill="#c8d0f0" stroke="#3c4490" stroke-width="0.9"/><path d="M16 29.8 H29.4 V27" stroke="#000" stroke-width="1" fill="none"/></g>
<g transform="translate(701.9,105.9)"><circle r="13" fill="url(#gRing)" stroke="#c4c4c4" stroke-width="0.6"/><circle r="10.5" fill="url(#gQb)"/><text x="0" y="6.6" text-anchor="middle" font-family="Liberation Sans, sans-serif" font-weight="bold" font-size="19" fill="#fff">?</text></g>
<g transform="translate(823,105.9)"><circle r="12.5" fill="url(#gRing)" stroke="#c4c4c4" stroke-width="0.6"/><circle r="10" fill="url(#gQg)"/><text x="0" y="6.6" text-anchor="middle" font-family="Liberation Sans, sans-serif" font-weight="bold" font-size="19" fill="#fff">?</text></g>
<g><rect x="16.6" y="133.8" width="27" height="26.8" fill="#cfcfcf" stroke="#111" stroke-width="1.2"/><rect x="19.4" y="137" width="21.2" height="20.8" rx="3" fill="#8a8a8a" stroke="#8b0a0a" stroke-width="1.5"/><circle cx="21.4" cy="139" r="1.1" fill="#8b0a0a"/><circle cx="30" cy="138.6" r="1.1" fill="#8b0a0a"/><circle cx="38.6" cy="139" r="1.1" fill="#8b0a0a"/><circle cx="21.2" cy="147.4" r="1.1" fill="#8b0a0a"/><circle cx="38.8" cy="147.4" r="1.1" fill="#8b0a0a"/><circle cx="21.4" cy="155.8" r="1.1" fill="#8b0a0a"/><circle cx="30" cy="156.2" r="1.1" fill="#8b0a0a"/><circle cx="38.6" cy="155.8" r="1.1" fill="#8b0a0a"/><path d="M34 140.6 L36.8 138.8 M36 143.4 L38.6 140.8" stroke="#8b0a0a" stroke-width="1"/></g>
<g><path d="M54.7 133.8 H67.4 V146.6 H80.6 V160.6 H54.7 Z" fill="#cfcfcf" stroke="#111" stroke-width="1.2"/><path d="M56.8 136 H65.2 V149 H78.4 V158.4 H56.8 Z" fill="#8e8e8e" stroke="#8b0a0a" stroke-width="1.2"/><path d="M56.8 149 H65.2 V158.4" stroke="#8b0a0a" stroke-width="1" fill="none"/><circle cx="58" cy="137.4" r="0.9" fill="#8b0a0a"/><circle cx="61" cy="137" r="0.9" fill="#8b0a0a"/><circle cx="64" cy="137.4" r="0.9" fill="#8b0a0a"/><circle cx="58" cy="143" r="0.9" fill="#8b0a0a"/><circle cx="64" cy="143" r="0.9" fill="#8b0a0a"/><circle cx="58" cy="150.4" r="0.9" fill="#8b0a0a"/><circle cx="64" cy="150.4" r="0.9" fill="#8b0a0a"/><circle cx="58" cy="157" r="0.9" fill="#8b0a0a"/><circle cx="64" cy="157" r="0.9" fill="#8b0a0a"/><circle cx="70" cy="150.4" r="0.9" fill="#8b0a0a"/><circle cx="77" cy="150.4" r="0.9" fill="#8b0a0a"/><circle cx="70" cy="157" r="0.9" fill="#8b0a0a"/><circle cx="77" cy="157" r="0.9" fill="#8b0a0a"/><circle cx="74" cy="150.2" r="0.9" fill="#8b0a0a"/><circle cx="74" cy="157.2" r="0.9" fill="#8b0a0a"/></g>
<g><path d="M96.4 135.6 H110.4 V146.8 H117.4 V160.6 H90.4 V146.8 H96.4 Z" fill="#cfcfcf" stroke="#111" stroke-width="1.2"/><path d="M98.6 137.8 H108.2 V149 H115.2 V158.4 H92.6 V149 H98.6 Z" fill="#8e8e8e" stroke="#8b0a0a" stroke-width="1.2"/><path d="M98.6 149 V158.4 M108.2 149 V158.4 M98.6 149 H108.2" stroke="#8b0a0a" stroke-width="1" fill="none"/><circle cx="100" cy="139.2" r="0.9" fill="#8b0a0a"/><circle cx="103.4" cy="138.8" r="0.9" fill="#8b0a0a"/><circle cx="106.8" cy="139.2" r="0.9" fill="#8b0a0a"/><circle cx="100" cy="144" r="0.9" fill="#8b0a0a"/><circle cx="106.8" cy="144" r="0.9" fill="#8b0a0a"/><circle cx="94" cy="150.4" r="0.9" fill="#8b0a0a"/><circle cx="94" cy="157" r="0.9" fill="#8b0a0a"/><circle cx="100" cy="157" r="0.9" fill="#8b0a0a"/><circle cx="106.8" cy="157" r="0.9" fill="#8b0a0a"/><circle cx="113.8" cy="150.4" r="0.9" fill="#8b0a0a"/><circle cx="113.8" cy="157" r="0.9" fill="#8b0a0a"/><circle cx="103.4" cy="157.2" r="0.9" fill="#8b0a0a"/><circle cx="97" cy="153.6" r="0.9" fill="#8b0a0a"/><circle cx="110.4" cy="153.6" r="0.9" fill="#8b0a0a"/></g>
<g><polygon points="154.3,152.4 146.4,160.3 135.2,160.3 127.3,152.4 127.3,141.2 135.2,133.3 146.4,133.3 154.3,141.2" fill="#e4e4e4" stroke="#111" stroke-width="1" stroke-linejoin="round"/><circle cx="140.8" cy="146.8" r="13.4" fill="#d0d0d0" stroke="#222" stroke-width="0.7"/><circle cx="140.8" cy="146.8" r="11.4" fill="#8a8a8a" stroke="#8b0a0a" stroke-width="1.6"/><circle cx="150.8" cy="146.8" r="0.9" fill="#8b0a0a"/><circle cx="149.8096886790242" cy="151.1388373911756" r="0.9" fill="#8b0a0a"/><circle cx="147.03489801858734" cy="154.6183148246803" r="0.9" fill="#8b0a0a"/><circle cx="143.02520933956316" cy="156.54927912181824" r="0.9" fill="#8b0a0a"/><circle cx="138.57479066043686" cy="156.54927912181824" r="0.9" fill="#8b0a0a"/><circle cx="134.56510198141268" cy="154.6183148246803" r="0.9" fill="#8b0a0a"/><circle cx="131.79031132097583" cy="151.1388373911756" r="0.9" fill="#8b0a0a"/><circle cx="130.8" cy="146.8" r="0.9" fill="#8b0a0a"/><circle cx="131.79031132097583" cy="142.46116260882442" r="0.9" fill="#8b0a0a"/><circle cx="134.56510198141268" cy="138.9816851753197" r="0.9" fill="#8b0a0a"/><circle cx="138.57479066043686" cy="137.05072087818178" r="0.9" fill="#8b0a0a"/><circle cx="143.02520933956313" cy="137.05072087818178" r="0.9" fill="#8b0a0a"/><circle cx="147.03489801858734" cy="138.9816851753197" r="0.9" fill="#8b0a0a"/><circle cx="149.8096886790242" cy="142.46116260882442" r="0.9" fill="#8b0a0a"/></g>
<g><rect x="163.6" y="139.8" width="29" height="14.4" fill="#bdbdbd" stroke="#111" stroke-width="1.2"/><rect x="165.6" y="141.8" width="25" height="10.4" fill="#6e6e6e" stroke="#8b0a0a" stroke-width="1.2"/><rect x="174" y="142.4" width="8.6" height="9.2" fill="#9a9a9a"/><path d="M173.6 141.8 V152.2 M183 141.8 V152.2" stroke="#8b0a0a" stroke-width="1.2"/><circle cx="167" cy="143" r="0.8" fill="#8b0a0a"/><circle cx="170.4" cy="143" r="0.8" fill="#8b0a0a"/><circle cx="167" cy="151" r="0.8" fill="#8b0a0a"/><circle cx="170.4" cy="151" r="0.8" fill="#8b0a0a"/><circle cx="186" cy="143" r="0.8" fill="#8b0a0a"/><circle cx="189.4" cy="143" r="0.8" fill="#8b0a0a"/><circle cx="186" cy="151" r="0.8" fill="#8b0a0a"/><circle cx="189.4" cy="151" r="0.8" fill="#8b0a0a"/><circle cx="176" cy="143" r="0.8" fill="#8b0a0a"/><circle cx="180.4" cy="143" r="0.8" fill="#8b0a0a"/><circle cx="176" cy="151" r="0.8" fill="#8b0a0a"/><circle cx="180.4" cy="151" r="0.8" fill="#8b0a0a"/></g>
<g><path d="M200.5 132.8 H206.8 V155.2 H223.2 V132.8 H229.5 V161.4 H200.5 Z" fill="#a8a8a8" stroke="#111" stroke-width="1.3"/><path d="M202 134.4 H205.2 V156.8 H224.8 V134.4 H228 V159.8 H202 Z" fill="#8e8e8e" stroke="#8b0a0a" stroke-width="0.9"/><path d="M202 140 H205.2 M224.8 140 H228 M202 154 H205.2 M224.8 154 H228 M207 156.8 V159.8 M223 156.8 V159.8" stroke="#8b0a0a" stroke-width="0.8"/></g>
<g><path d="M239.5 135.6 H265.5 V142.6 H258.6 V158.6 H246.4 V142.6 H239.5 Z" fill="#c4c4c4" stroke="#111" stroke-width="1.3"/><path d="M241.4 137.4 H263.6 V140.8 H256.8 V156.8 H248.2 V140.8 H241.4 Z" fill="#8a8a8a" stroke="#8b0a0a" stroke-width="1"/><circle cx="243" cy="139" r="0.8" fill="#8b0a0a"/><circle cx="247" cy="139" r="0.8" fill="#8b0a0a"/><circle cx="258" cy="139" r="0.8" fill="#8b0a0a"/><circle cx="262" cy="139" r="0.8" fill="#8b0a0a"/><circle cx="249.6" cy="147.4" r="0.8" fill="#8b0a0a"/><circle cx="255.4" cy="147.4" r="0.8" fill="#8b0a0a"/><circle cx="249.6" cy="155.4" r="0.8" fill="#8b0a0a"/><circle cx="252.5" cy="155.6" r="0.8" fill="#8b0a0a"/><circle cx="255.4" cy="155.4" r="0.8" fill="#8b0a0a"/><circle cx="249.6" cy="139.4" r="0.8" fill="#8b0a0a"/><circle cx="255.4" cy="139.4" r="0.8" fill="#8b0a0a"/></g>
<g><rect x="282.6" y="133.8" width="29" height="26.8" fill="#cfcfcf" stroke="#111" stroke-width="1.2"/><rect x="284.8" y="135.8" width="24.8" height="22.8" rx="2.4" fill="#9c9c9c" stroke="#8b0a0a" stroke-width="1.5"/><rect x="288.6" y="139.4" width="17.2" height="15.6" fill="#5a5a5a" stroke="#777" stroke-width="0.8"/><circle cx="286.6" cy="137.6" r="1.1" fill="#8b0a0a"/><circle cx="297.2" cy="137" r="1.1" fill="#8b0a0a"/><circle cx="307.8" cy="137.6" r="1.1" fill="#8b0a0a"/><circle cx="286.2" cy="147.2" r="1.1" fill="#8b0a0a"/><circle cx="308.2" cy="147.2" r="1.1" fill="#8b0a0a"/><circle cx="286.6" cy="156.8" r="1.1" fill="#8b0a0a"/><circle cx="297.2" cy="157.4" r="1.1" fill="#8b0a0a"/><circle cx="307.8" cy="156.8" r="1.1" fill="#8b0a0a"/></g>
<g><path d="M319.6 133 H336.6 V145.4 H347.6 V161.2 H319.6 Z" fill="#cfcfcf" stroke="#111" stroke-width="1.2"/><path d="M321.8 135.2 H334.4 V147.6 H345.4 V159 H321.8 Z" fill="#9c9c9c" stroke="#8b0a0a" stroke-width="1.1"/><path d="M324.6 137.8 H331 V150.4 H342.6 V156.4 H324.6 Z" fill="#5c5c5c" stroke="#444" stroke-width="0.6"/><path d="M321.8 147.6 H334.4 V159" stroke="#8b0a0a" stroke-width="0.8" fill="none"/><circle cx="323.2" cy="136.6" r="0.8" fill="#8b0a0a"/><circle cx="328" cy="136.4" r="0.8" fill="#8b0a0a"/><circle cx="333" cy="136.6" r="0.8" fill="#8b0a0a"/><circle cx="323.2" cy="142" r="0.8" fill="#8b0a0a"/><circle cx="333" cy="142" r="0.8" fill="#8b0a0a"/><circle cx="323.2" cy="153" r="0.8" fill="#8b0a0a"/><circle cx="323.2" cy="157.6" r="0.8" fill="#8b0a0a"/><circle cx="328" cy="157.8" r="0.8" fill="#8b0a0a"/><circle cx="333" cy="157.8" r="0.8" fill="#8b0a0a"/><circle cx="338.6" cy="157.8" r="0.8" fill="#8b0a0a"/><circle cx="344" cy="157.6" r="0.8" fill="#8b0a0a"/><circle cx="344" cy="149" r="0.8" fill="#8b0a0a"/><circle cx="338.6" cy="148.8" r="0.8" fill="#8b0a0a"/></g>
<g><path d="M363.4 135.6 H378.4 V143.4 H385.6 V158.6 H356.4 V143.4 H363.4 Z" fill="#cfcfcf" stroke="#111" stroke-width="1.2"/><path d="M365.4 137.6 H376.4 V145.4 H383.6 V156.6 H358.4 V145.4 H365.4 Z" fill="#9c9c9c" stroke="#8b0a0a" stroke-width="1.1"/><path d="M368.4 140 H373.6 V148.4 H380.6 V153.6 H361.4 V148.4 H368.4 Z" fill="#5c5c5c" stroke="#444" stroke-width="0.6"/><path d="M365.4 145.4 V156.6 M376.4 145.4 V156.6 M365.4 145.4 H376.4" stroke="#8b0a0a" stroke-width="0.8" fill="none"/><circle cx="366.8" cy="139" r="0.8" fill="#8b0a0a"/><circle cx="371" cy="138.8" r="0.8" fill="#8b0a0a"/><circle cx="375" cy="139" r="0.8" fill="#8b0a0a"/><circle cx="359.8" cy="146.8" r="0.8" fill="#8b0a0a"/><circle cx="359.8" cy="155.2" r="0.8" fill="#8b0a0a"/><circle cx="366" cy="155.4" r="0.8" fill="#8b0a0a"/><circle cx="371" cy="155.4" r="0.8" fill="#8b0a0a"/><circle cx="376" cy="155.4" r="0.8" fill="#8b0a0a"/><circle cx="382.2" cy="155.2" r="0.8" fill="#8b0a0a"/><circle cx="382.2" cy="146.8" r="0.8" fill="#8b0a0a"/></g>
<g><polygon points="422.2,152.7 413.9,161.0 402.1,161.0 393.8,152.7 393.8,140.9 402.1,132.6 413.9,132.6 422.2,140.9" fill="#d8d8d8" stroke="#111" stroke-width="1.1"/><circle cx="408" cy="146.8" r="12.6" fill="#9c9c9c" stroke="#8b0a0a" stroke-width="1.3"/><circle cx="408" cy="146.8" r="8.6" fill="#5c5c5c" stroke="#333" stroke-width="0.7"/><circle cx="419.0" cy="146.8" r="0.8" fill="#8b0a0a"/><circle cx="417.9106575469266" cy="151.57272113029316" r="0.8" fill="#8b0a0a"/><circle cx="414.85838782044607" cy="155.40014630714833" r="0.8" fill="#8b0a0a"/><circle cx="410.4477302735195" cy="157.52420703400009" r="0.8" fill="#8b0a0a"/><circle cx="405.5522697264805" cy="157.52420703400009" r="0.8" fill="#8b0a0a"/><circle cx="401.14161217955393" cy="155.40014630714833" r="0.8" fill="#8b0a0a"/><circle cx="398.0893424530734" cy="151.57272113029316" r="0.8" fill="#8b0a0a"/><circle cx="397.0" cy="146.8" r="0.8" fill="#8b0a0a"/><circle cx="398.0893424530734" cy="142.02727886970686" r="0.8" fill="#8b0a0a"/><circle cx="401.14161217955393" cy="138.1998536928517" r="0.8" fill="#8b0a0a"/><circle cx="405.5522697264805" cy="136.07579296599994" r="0.8" fill="#8b0a0a"/><circle cx="410.4477302735194" cy="136.07579296599994" r="0.8" fill="#8b0a0a"/><circle cx="414.85838782044607" cy="138.1998536928517" r="0.8" fill="#8b0a0a"/><circle cx="417.9106575469266" cy="142.0272788697069" r="0.8" fill="#8b0a0a"/></g>
<g><path d="M437.2 133.6 H453.4 V135.6 H459.6 V143.6 H453.4 V161.4 H437.2 V143.6 H430.4 V135.6 H437.2 Z" fill="#cfcfcf" stroke="#111" stroke-width="1.2"/><path d="M439 135.4 H451.6 V159.6 H439 Z" fill="#9c9c9c" stroke="#8b0a0a" stroke-width="1"/><rect x="432.4" y="137.6" width="25.4" height="4" fill="#6a6a6a" stroke="#8b0a0a" stroke-width="0.7"/><rect x="441.4" y="138.6" width="7.8" height="18.6" fill="#5a5a5a" stroke="#444" stroke-width="0.6"/></g>
<g><polygon points="475.8,145.2 489.9,139 504.9,146.6 490.3,154.5" fill="#a4a4a4" stroke="#8a8a8a" stroke-width="0.5"/><polygon points="475.8,145.2 490.3,154.5 504.9,146.6 504.9,147.4 490.3,155.6 475.8,146.2" fill="#4a4a4a"/><ellipse cx="490.5" cy="145.4" rx="4" ry="2.1" fill="#c0485c"/></g>
<g><polygon points="512.4,145.2 527.9,139 541.9,146.6 527.4,154" fill="#a4a4a4"/><polygon points="512.4,145.2 527.4,154 541.9,146.6 541.9,147.6 527.4,155.4 512.4,146.4" fill="#5a5a5a"/><polygon points="515.4,144.6 527.8,139.8 538.8,145.8 527.4,151.6" fill="none" stroke="#1432e4" stroke-width="1.8"/><ellipse cx="527.2" cy="145.6" rx="4" ry="2.1" fill="#c0485c"/></g>
<g><polygon points="549.6,143.6 567,138 578.6,143 562,151" fill="#a8a8a8"/><polygon points="549.6,143.6 562,151 578.6,143 578.6,146 562,154.6 549.6,147" fill="#3c3c3c"/><ellipse cx="562.4" cy="142.6" rx="4" ry="2" fill="#c0485c"/><path d="M550.4 143 L561.6 149.8 L578 140 L567.6 135" stroke="#2a4cf0" stroke-width="2.4" fill="none" stroke-linejoin="round"/></g>
<g><polygon points="598,138.4 610,137.8 610.4,151 602,157.4 586.6,154.4" fill="#585858"/><polygon points="598,138.4 586.6,154.4 592,156.2 602,157.4 602.4,140" fill="#787878"/><path d="M596.6 141.6 L603 142 M594.4 144.6 L602.4 145.2 M592.4 147.6 L602 148.4 M590.4 150.6 L602 151.6 M588.4 153.4 L602 154.6" stroke="#4a4a4a" stroke-width="0.9"/><polygon points="602,157.4 610.4,151 616,152 616,154 606,157.6" fill="#d0d0d0" fill-opacity="0.8"/></g></svg>
<!-- left toolbars -->
<div class="a" style="left:0px;top:170px;width:64px;height:848px;background:#f0f0f0"></div>
<div class="a" style="left:0px;top:1017px;width:64px;height:1px;background:#a0a0a0"></div>
<div class="a" style="left:0px;top:171px;width:64px;height:1px;background:#a0a0a0"></div>
<div class="a" style="left:63px;top:171px;width:1px;height:846px;background:#a0a0a0"></div>
<div class="a" style="left:62px;top:172px;width:1px;height:845px;background:#fff"></div>
<div class="a" style="left:59px;top:173px;width:1px;height:164px;background:#8c8c8c"></div>
<div class="a" style="left:0px;top:337px;width:62px;height:1px;background:#a0a0a0"></div>
<div class="a" style="left:0px;top:338px;width:62px;height:1px;background:#fff"></div>
<div class="a" style="left:62px;top:339px;width:1px;height:679px;background:#b4b4b4"></div>
<div class="a" style="left:4px;top:589px;width:58px;height:1px;background:#a0a0a0"></div>
<svg style="left:5px;top:176px" width="4" height="158"><path d="M0.5 2.6 L2.3 0.8 M0.5 6.6 L2.3 4.8 M0.5 10.6 L2.3 8.8 M0.5 14.6 L2.3 12.8 M0.5 18.6 L2.3 16.8 M0.5 22.6 L2.3 20.8 M0.5 26.6 L2.3 24.8 M0.5 30.6 L2.3 28.8 M0.5 34.6 L2.3 32.8 M0.5 38.6 L2.3 36.8 M0.5 42.6 L2.3 40.8 M0.5 46.6 L2.3 44.8 M0.5 50.6 L2.3 48.8 M0.5 54.6 L2.3 52.8 M0.5 58.6 L2.3 56.8 M0.5 62.6 L2.3 60.8 M0.5 66.6 L2.3 64.8 M0.5 70.6 L2.3 68.8 M0.5 74.6 L2.3 72.8 M0.5 78.6 L2.3 76.8 M0.5 82.6 L2.3 80.8 M0.5 86.6 L2.3 84.8 M0.5 90.6 L2.3 88.8 M0.5 94.6 L2.3 92.8 M0.5 98.6 L2.3 96.8 M0.5 102.6 L2.3 100.8 M0.5 106.6 L2.3 104.8 M0.5 110.6 L2.3 108.8 M0.5 114.6 L2.3 112.8 M0.5 118.6 L2.3 116.8 M0.5 122.6 L2.3 120.8 M0.5 126.6 L2.3 124.8 M0.5 130.6 L2.3 128.8 M0.5 134.6 L2.3 132.8 M0.5 138.6 L2.3 136.8 M0.5 142.6 L2.3 140.8 M0.5 146.6 L2.3 144.8 M0.5 150.6 L2.3 148.8 M0.5 154.6 L2.3 152.8 " stroke="#9c9c9c" stroke-width="1.5" fill="none"/></svg>
<svg style="left:8px;top:342px" width="4" height="244"><path d="M0.5 2.6 L2.3 0.8 M0.5 6.6 L2.3 4.8 M0.5 10.6 L2.3 8.8 M0.5 14.6 L2.3 12.8 M0.5 18.6 L2.3 16.8 M0.5 22.6 L2.3 20.8 M0.5 26.6 L2.3 24.8 M0.5 30.6 L2.3 28.8 M0.5 34.6 L2.3 32.8 M0.5 38.6 L2.3 36.8 M0.5 42.6 L2.3 40.8 M0.5 46.6 L2.3 44.8 M0.5 50.6 L2.3 48.8 M0.5 54.6 L2.3 52.8 M0.5 58.6 L2.3 56.8 M0.5 62.6 L2.3 60.8 M0.5 66.6 L2.3 64.8 M0.5 70.6 L2.3 68.8 M0.5 74.6 L2.3 72.8 M0.5 78.6 L2.3 76.8 M0.5 82.6 L2.3 80.8 M0.5 86.6 L2.3 84.8 M0.5 90.6 L2.3 88.8 M0.5 94.6 L2.3 92.8 M0.5 98.6 L2.3 96.8 M0.5 102.6 L2.3 100.8 M0.5 106.6 L2.3 104.8 M0.5 110.6 L2.3 108.8 M0.5 114.6 L2.3 112.8 M0.5 118.6 L2.3 116.8 M0.5 122.6 L2.3 120.8 M0.5 126.6 L2.3 124.8 M0.5 130.6 L2.3 128.8 M0.5 134.6 L2.3 132.8 M0.5 138.6 L2.3 136.8 M0.5 142.6 L2.3 140.8 M0.5 146.6 L2.3 144.8 M0.5 150.6 L2.3 148.8 M0.5 154.6 L2.3 152.8 M0.5 158.6 L2.3 156.8 M0.5 162.6 L2.3 160.8 M0.5 166.6 L2.3 164.8 M0.5 170.6 L2.3 168.8 M0.5 174.6 L2.3 172.8 M0.5 178.6 L2.3 176.8 M0.5 182.6 L2.3 180.8 M0.5 186.6 L2.3 184.8 M0.5 190.6 L2.3 188.8 M0.5 194.6 L2.3 192.8 M0.5 198.6 L2.3 196.8 M0.5 202.6 L2.3 200.8 M0.5 206.6 L2.3 204.8 M0.5 210.6 L2.3 208.8 M0.5 214.6 L2.3 212.8 M0.5 218.6 L2.3 216.8 M0.5 222.6 L2.3 220.8 M0.5 226.6 L2.3 224.8 M0.5 230.6 L2.3 228.8 M0.5 234.6 L2.3 232.8 M0.5 238.6 L2.3 236.8 M0.5 242.6 L2.3 240.8 " stroke="#9c9c9c" stroke-width="1.5" fill="none"/></svg>
<div class="hl" style="left:12px;top:175px;width:44px;height:36px"></div>
<div class="hl" style="left:12px;top:212px;width:44px;height:36px"></div>
<div class="hl" style="left:12px;top:249px;width:44px;height:36px"></div>
<div class="hl" style="left:12px;top:286px;width:44px;height:36px"></div>
<svg style="left:0;top:170px" width="64" height="440" viewBox="0 170 64 440"><g transform="translate(19.2,177)"><path d="M10 4.2 H23.6 Q24.6 4.2 24.6 5.2 V26.6 Q24.6 27.6 23.6 27.6 H5 Q4 27.6 4 26.6 V10.2 Z" fill="url(#gDoc)" stroke="#5a5a5a" stroke-width="1.3" stroke-linejoin="round"/><path d="M10 4.2 V10.2 H4 Z" fill="#6a6a6a" stroke="#5a5a5a" stroke-width="0.8" stroke-linejoin="round"/><rect x="4.7" y="25" width="19.2" height="2" fill="#a8a8a8"/><text x="14.5" y="23.6" font-family="Liberation Sans, sans-serif" font-size="9.6" font-weight="bold" text-anchor="middle" fill="#3e3e3e" textLength="17.8" lengthAdjust="spacingAndGlyphs">DWG</text></g>
<path d="M33 193.4 v-6.4 a6.9 6.9 0 0 1 13.8 0 v6.4 a1 1 0 0 1 -1 1 h-2.6 a1 1 0 0 1 -1 -1 v-6.2 a2.3 2.3 0 0 0 -4.6 0 v6.2 a1 1 0 0 1 -1 1 h-2.6 a1 1 0 0 1 -1 -1 Z" fill="url(#gMag)" stroke="#8c1414" stroke-width="0.9"/><rect x="33.6" y="188.4" width="3.4" height="3.6" fill="#a8dcf4"/><rect x="42.8" y="188.4" width="3.4" height="3.6" fill="#a8dcf4"/>
<g transform="translate(23.4,218.4)"><rect x="0" y="0" width="20.6" height="24" rx="1" fill="#6a6a6a"/><rect x="1.4" y="1.4" width="2.8" height="2.8" fill="#fff"/><rect x="5.2" y="1.4" width="2.8" height="2.8" fill="#fff"/><rect x="9.0" y="1.4" width="2.8" height="2.8" fill="#fff"/><rect x="12.8" y="1.4" width="2.8" height="2.8" fill="#fff"/><rect x="16.6" y="1.4" width="2.8" height="2.8" fill="#fff"/><rect x="1.4" y="5.2" width="2.8" height="2.8" fill="#fff"/><rect x="5.2" y="5.2" width="2.8" height="2.8" fill="#fff"/><rect x="9.0" y="5.2" width="2.8" height="2.8" fill="#fff"/><rect x="12.8" y="5.2" width="2.8" height="2.8" fill="#fff"/><rect x="16.6" y="5.2" width="2.8" height="2.8" fill="#fff"/><rect x="1.4" y="9.0" width="2.8" height="2.8" fill="#fff"/><rect x="5.2" y="9.0" width="2.8" height="2.8" fill="#fff"/><rect x="9.0" y="9.0" width="2.8" height="2.8" fill="#fff"/><rect x="12.8" y="9.0" width="2.8" height="2.8" fill="#fff"/><rect x="16.6" y="9.0" width="2.8" height="2.8" fill="#fff"/><rect x="1.4" y="12.8" width="2.8" height="2.8" fill="#fff"/><rect x="5.2" y="12.8" width="2.8" height="2.8" fill="#fff"/><rect x="9.0" y="12.8" width="2.8" height="2.8" fill="#fff"/><rect x="12.8" y="12.8" width="2.8" height="2.8" fill="#fff"/><rect x="16.6" y="12.8" width="2.8" height="2.8" fill="#fff"/><rect x="1.4" y="16.6" width="2.8" height="2.8" fill="#fff"/><rect x="5.2" y="16.6" width="2.8" height="2.8" fill="#fff"/><rect x="9.0" y="16.6" width="2.8" height="2.8" fill="#fff"/><rect x="12.8" y="16.6" width="2.8" height="2.8" fill="#fff"/><rect x="16.6" y="16.6" width="2.8" height="2.8" fill="#fff"/><rect x="1.4" y="20.6" width="2.8" height="2.2" fill="#a4a4a4"/><rect x="5.2" y="20.6" width="2.8" height="2.2" fill="#a4a4a4"/><rect x="9.0" y="20.6" width="2.8" height="2.2" fill="#a4a4a4"/><rect x="12.8" y="20.6" width="2.8" height="2.2" fill="#a4a4a4"/><rect x="16.6" y="20.6" width="2.8" height="2.2" fill="#a4a4a4"/><path d="M4.6 2.8 V18.4 H17" stroke="#0a8a0a" stroke-width="2.4" fill="none"/><rect x="3.2" y="3" width="2.8" height="2.8" fill="#1a8cf0"/><rect x="3.2" y="17" width="2.8" height="2.8" fill="#1a8cf0"/><rect x="15.6" y="17" width="2.8" height="2.8" fill="#1a8cf0"/></g>
<path d="M33 230.4 v-6.4 a6.9 6.9 0 0 1 13.8 0 v6.4 a1 1 0 0 1 -1 1 h-2.6 a1 1 0 0 1 -1 -1 v-6.2 a2.3 2.3 0 0 0 -4.6 0 v6.2 a1 1 0 0 1 -1 1 h-2.6 a1 1 0 0 1 -1 -1 Z" fill="url(#gMag)" stroke="#8c1414" stroke-width="0.9"/><rect x="33.6" y="225.4" width="3.4" height="3.6" fill="#a8dcf4"/><rect x="42.8" y="225.4" width="3.4" height="3.6" fill="#a8dcf4"/>
<g transform="translate(23.4,255.4)"><rect x="0" y="0" width="20.6" height="24" rx="1" fill="#6a6a6a"/><rect x="1.4" y="1.4" width="2.8" height="2.8" fill="#fff"/><rect x="5.2" y="1.4" width="2.8" height="2.8" fill="#fff"/><rect x="9.0" y="1.4" width="2.8" height="2.8" fill="#fff"/><rect x="12.8" y="1.4" width="2.8" height="2.8" fill="#fff"/><rect x="16.6" y="1.4" width="2.8" height="2.8" fill="#fff"/><rect x="1.4" y="5.2" width="2.8" height="2.8" fill="#fff"/><rect x="5.2" y="5.2" width="2.8" height="2.8" fill="#fff"/><rect x="9.0" y="5.2" width="2.8" height="2.8" fill="#fff"/><rect x="12.8" y="5.2" width="2.8" height="2.8" fill="#fff"/><rect x="16.6" y="5.2" width="2.8" height="2.8" fill="#fff"/><rect x="1.4" y="9.0" width="2.8" height="2.8" fill="#fff"/><rect x="5.2" y="9.0" width="2.8" height="2.8" fill="#fff"/><rect x="9.0" y="9.0" width="2.8" height="2.8" fill="#fff"/><rect x="12.8" y="9.0" width="2.8" height="2.8" fill="#fff"/><rect x="16.6" y="9.0" width="2.8" height="2.8" fill="#fff"/><rect x="1.4" y="12.8" width="2.8" height="2.8" fill="#fff"/><rect x="5.2" y="12.8" width="2.8" height="2.8" fill="#fff"/><rect x="9.0" y="12.8" width="2.8" height="2.8" fill="#fff"/><rect x="12.8" y="12.8" width="2.8" height="2.8" fill="#fff"/><rect x="16.6" y="12.8" width="2.8" height="2.8" fill="#fff"/><rect x="1.4" y="16.6" width="2.8" height="2.8" fill="#fff"/><rect x="5.2" y="16.6" width="2.8" height="2.8" fill="#fff"/><rect x="9.0" y="16.6" width="2.8" height="2.8" fill="#fff"/><rect x="12.8" y="16.6" width="2.8" height="2.8" fill="#fff"/><rect x="16.6" y="16.6" width="2.8" height="2.8" fill="#fff"/><rect x="1.4" y="20.6" width="2.8" height="2.2" fill="#a4a4a4"/><rect x="5.2" y="20.6" width="2.8" height="2.2" fill="#a4a4a4"/><rect x="9.0" y="20.6" width="2.8" height="2.2" fill="#a4a4a4"/><rect x="12.8" y="20.6" width="2.8" height="2.2" fill="#a4a4a4"/><rect x="16.6" y="20.6" width="2.8" height="2.2" fill="#a4a4a4"/></g>
<path d="M33 267.4 v-6.4 a6.9 6.9 0 0 1 13.8 0 v6.4 a1 1 0 0 1 -1 1 h-2.6 a1 1 0 0 1 -1 -1 v-6.2 a2.3 2.3 0 0 0 -4.6 0 v6.2 a1 1 0 0 1 -1 1 h-2.6 a1 1 0 0 1 -1 -1 Z" fill="url(#gMag)" stroke="#8c1414" stroke-width="0.9"/><rect x="33.6" y="262.4" width="3.4" height="3.6" fill="#a8dcf4"/><rect x="42.8" y="262.4" width="3.4" height="3.6" fill="#a8dcf4"/>
<g transform="translate(23.4,292.4)"><rect x="0" y="0" width="20.6" height="24" rx="1" fill="#6a6a6a"/><rect x="1.4" y="1.4" width="2.8" height="2.8" fill="#f01010"/><rect x="5.2" y="1.4" width="2.8" height="2.8" fill="#fff"/><rect x="9.0" y="1.4" width="2.8" height="2.8" fill="#fff"/><rect x="12.8" y="1.4" width="2.8" height="2.8" fill="#fff"/><rect x="16.6" y="1.4" width="2.8" height="2.8" fill="#fff"/><rect x="1.4" y="5.2" width="2.8" height="2.8" fill="#f01010"/><rect x="5.2" y="5.2" width="2.8" height="2.8" fill="#fff"/><rect x="9.0" y="5.2" width="2.8" height="2.8" fill="#fff"/><rect x="12.8" y="5.2" width="2.8" height="2.8" fill="#fff"/><rect x="16.6" y="5.2" width="2.8" height="2.8" fill="#fff"/><rect x="1.4" y="9.0" width="2.8" height="2.8" fill="#f01010"/><rect x="5.2" y="9.0" width="2.8" height="2.8" fill="#fff"/><rect x="9.0" y="9.0" width="2.8" height="2.8" fill="#fff"/><rect x="12.8" y="9.0" width="2.8" height="2.8" fill="#fff"/><rect x="16.6" y="9.0" width="2.8" height="2.8" fill="#fff"/><rect x="1.4" y="12.8" width="2.8" height="2.8" fill="#f01010"/><rect x="5.2" y="12.8" width="2.8" height="2.8" fill="#fff"/><rect x="9.0" y="12.8" width="2.8" height="2.8" fill="#fff"/><rect x="12.8" y="12.8" width="2.8" height="2.8" fill="#fff"/><rect x="16.6" y="12.8" width="2.8" height="2.8" fill="#fff"/><rect x="1.4" y="16.6" width="2.8" height="2.8" fill="#f01010"/><rect x="5.2" y="16.6" width="2.8" height="2.8" fill="#f01010"/><rect x="9.0" y="16.6" width="2.8" height="2.8" fill="#f01010"/><rect x="12.8" y="16.6" width="2.8" height="2.8" fill="#f01010"/><rect x="16.6" y="16.6" width="2.8" height="2.8" fill="#f01010"/><rect x="1.4" y="20.6" width="2.8" height="2.2" fill="#a4a4a4"/><rect x="5.2" y="20.6" width="2.8" height="2.2" fill="#a4a4a4"/><rect x="9.0" y="20.6" width="2.8" height="2.2" fill="#a4a4a4"/><rect x="12.8" y="20.6" width="2.8" height="2.2" fill="#a4a4a4"/><rect x="16.6" y="20.6" width="2.8" height="2.2" fill="#a4a4a4"/></g>
<path d="M33 304.4 v-6.4 a6.9 6.9 0 0 1 13.8 0 v6.4 a1 1 0 0 1 -1 1 h-2.6 a1 1 0 0 1 -1 -1 v-6.2 a2.3 2.3 0 0 0 -4.6 0 v6.2 a1 1 0 0 1 -1 1 h-2.6 a1 1 0 0 1 -1 -1 Z" fill="url(#gMag)" stroke="#8c1414" stroke-width="0.9"/><rect x="33.6" y="299.4" width="3.4" height="3.6" fill="#a8dcf4"/><rect x="42.8" y="299.4" width="3.4" height="3.6" fill="#a8dcf4"/>
<g transform="translate(38.5,355.2)"><path d="M5.2 8 L9 13.6" stroke="#2a2a2a" stroke-width="5.4" stroke-linecap="round"/><path d="M5.8 8.4 L8.6 12.4" stroke="#6a6a6a" stroke-width="1.3" stroke-linecap="round"/><circle r="8.7" fill="#dcdcdc" stroke="#2c2c2c" stroke-width="3.2"/><circle r="6.6" fill="none" stroke="#9c9c9c" stroke-width="0.9"/><circle r="5.9" fill="none" stroke="#3a3a3a" stroke-width="0.7"/><circle r="5.4" fill="#a8e0f8"/><path d="M-4 0 H4 M0 -4 V4" stroke="#1884d4" stroke-width="2.4"/></g>
<g transform="translate(38.5,392.2)"><path d="M5.2 8 L9 13.6" stroke="#2a2a2a" stroke-width="5.4" stroke-linecap="round"/><path d="M5.8 8.4 L8.6 12.4" stroke="#6a6a6a" stroke-width="1.3" stroke-linecap="round"/><circle r="8.7" fill="#dcdcdc" stroke="#2c2c2c" stroke-width="3.2"/><circle r="6.6" fill="none" stroke="#9c9c9c" stroke-width="0.9"/><circle r="5.9" fill="none" stroke="#3a3a3a" stroke-width="0.7"/><circle r="5.4" fill="#a8e0f8"/><path d="M-4.4 0 H4.4" stroke="#1884d4" stroke-width="2.4"/></g>
<g transform="translate(38.5,429.2)"><path d="M5.2 8 L9 13.6" stroke="#2a2a2a" stroke-width="5.4" stroke-linecap="round"/><path d="M5.8 8.4 L8.6 12.4" stroke="#6a6a6a" stroke-width="1.3" stroke-linecap="round"/><circle r="8.7" fill="#dcdcdc" stroke="#2c2c2c" stroke-width="3.2"/><circle r="6.6" fill="none" stroke="#9c9c9c" stroke-width="0.9"/><circle r="5.9" fill="none" stroke="#3a3a3a" stroke-width="0.7"/><circle r="5.4" fill="#a8e0f8"/><path d="M-4.2 -0.8 L0 -4.6 L4.2 -0.8 Z M-4.2 0.8 L0 4.6 L4.2 0.8 Z" fill="#1884d4"/></g>
<g transform="translate(23,465)"><rect x="0.8" y="0.8" width="16.4" height="13.4" rx="1" fill="#c4e6fa" stroke="#1c84d0" stroke-width="1.4"/><path d="M4.4 1 V14 M7.6 1 V14 M10.8 1 V14 M14 1 V14 M1 4.2 H17 M1 7.4 H17 M1 10.6 H17" stroke="#62b4e8" stroke-width="0.7"/></g>
<g transform="translate(38.6,465)"><path d="M5.2 8 L9 13.6" stroke="#2a2a2a" stroke-width="5.4" stroke-linecap="round"/><path d="M5.8 8.4 L8.6 12.4" stroke="#6a6a6a" stroke-width="1.3" stroke-linecap="round"/><circle r="8.7" fill="rgba(224,232,236,0.6)" stroke="#2c2c2c" stroke-width="3.2"/><circle r="6.6" fill="none" stroke="#9c9c9c" stroke-width="0.9"/><circle r="5.9" fill="none" stroke="#3a3a3a" stroke-width="0.7"/></g>
<g transform="translate(22,502)"><path d="M4 -6 V15" stroke="#1478c8" stroke-width="1.6"/><path d="M0.8 -3.2 L4 -7.4 L7.2 -3.2 Z M0.8 12.6 L4 16.8 L7.2 12.6 Z" fill="#1478c8"/><path d="M2.4 7.2 L14 1 Q15 0.6 16 1 L28 5.6 Q29 6.2 28 7 L17.4 13.4 Q16.4 14 15.4 13.6 L2.6 9 Q1.4 8.2 2.4 7.2 Z" fill="#1a8cd4"/><path d="M2.4 5.6 L14 -0.6 Q15 -1 16 -0.6 L28 4 Q29 4.6 28 5.4 L17.4 11.8 Q16.4 12.4 15.4 12 L2.6 7.4 Q1.4 6.6 2.4 5.6 Z" fill="#5cc0f0"/><path d="M9 2.2 L22 8.8 M22 1.8 L10 10" stroke="#8cd4f6" stroke-width="0.8"/></g>
<g transform="translate(38.6,502)"><path d="M5.2 8 L9 13.6" stroke="#2a2a2a" stroke-width="5.4" stroke-linecap="round"/><path d="M5.8 8.4 L8.6 12.4" stroke="#6a6a6a" stroke-width="1.3" stroke-linecap="round"/><circle r="8.7" fill="rgba(216,236,248,0.35)" stroke="#2c2c2c" stroke-width="3.2"/><circle r="6.6" fill="none" stroke="#9c9c9c" stroke-width="0.9"/><circle r="5.9" fill="none" stroke="#3a3a3a" stroke-width="0.7"/></g>
<g transform="translate(22,539)"><path d="M4 -6 V15" stroke="#1478c8" stroke-width="1.6"/><path d="M0.8 -3.2 L4 -7.4 L7.2 -3.2 Z M0.8 12.6 L4 16.8 L7.2 12.6 Z" fill="#1478c8"/><path d="M2.4 7.2 L14 1 Q15 0.6 16 1 L28 5.6 Q29 6.2 28 7 L17.4 13.4 Q16.4 14 15.4 13.6 L2.6 9 Q1.4 8.2 2.4 7.2 Z" fill="#1a8cd4"/><path d="M2.4 5.6 L14 -0.6 Q15 -1 16 -0.6 L28 4 Q29 4.6 28 5.4 L17.4 11.8 Q16.4 12.4 15.4 12 L2.6 7.4 Q1.4 6.6 2.4 5.6 Z" fill="#5cc0f0"/><path d="M9 2.2 L22 8.8 M22 1.8 L10 10" stroke="#8cd4f6" stroke-width="0.8"/></g>
<g transform="translate(38.6,539)"><path d="M5.2 8 L9 13.6" stroke="#2a2a2a" stroke-width="5.4" stroke-linecap="round"/><path d="M5.8 8.4 L8.6 12.4" stroke="#6a6a6a" stroke-width="1.3" stroke-linecap="round"/><circle r="8.7" fill="rgba(216,236,248,0.35)" stroke="#2c2c2c" stroke-width="3.2"/><circle r="6.6" fill="none" stroke="#9c9c9c" stroke-width="0.9"/><circle r="5.9" fill="none" stroke="#3a3a3a" stroke-width="0.7"/></g></svg>
<!-- drawing canvas -->
<div class="a" style="left:64px;top:170px;width:1462px;height:848px;background:#fff"></div>
<svg style="left:0;top:0" width="1919" height="1039" shape-rendering="crispEdges"><path d="M66 1010.5 H1526 M374.5 172 V1017" stroke="#c8c8c8" fill="none"/>
<rect x="375" y="175" width="792" height="835" fill="#f5f7bf"/>
<rect x="1167" y="573" width="81" height="245" fill="#f5f7bf"/>
<rect x="390" y="818" width="233" height="176" fill="#c5c996"/>
<path d="M374.5 322 V174.5 H1166.5 V300" stroke="#0000ff" fill="none"/>
<path d="M1167 572.5 H1248.5 V817.5 H1136" stroke="#0000ff" fill="none"/>
<rect x="390.5" y="300.5" width="758" height="16" fill="#ccffcc" stroke="#555"/>
<rect x="390.5" y="571.5" width="758" height="16" fill="#ccffcc" stroke="#555"/>
<rect x="390.5" y="802.5" width="758" height="16" fill="#ccffcc" stroke="#555"/>
<rect x="412.5" y="994.5" width="628" height="16" fill="#ccffcc" stroke="#555"/>
<rect x="623.5" y="316.5" width="16" height="255" fill="#ccffcc" stroke="#555"/>
<rect x="623.5" y="587.5" width="16" height="215" fill="#ccffcc" stroke="#555"/>
<rect x="623.5" y="818.5" width="16" height="176" fill="#ccffcc" stroke="#555"/>
<rect x="876.5" y="316.5" width="16" height="255" fill="#ccffcc" stroke="#555"/>
<rect x="876.5" y="587.5" width="16" height="215" fill="#ccffcc" stroke="#555"/>
<rect x="876.5" y="818.5" width="16" height="176" fill="#ccffcc" stroke="#555"/>
<rect x="1150.5" y="316.5" width="16" height="255" fill="#ccffcc" stroke="#555"/>
<rect x="1150.5" y="587.5" width="16" height="215" fill="#ccffcc" stroke="#555"/>
<rect x="1150.5" y="840.5" width="16" height="154" fill="#ccffcc" stroke="#555"/>
<rect x="374.5" y="420.5" width="16" height="151" fill="#ccffcc" stroke="#555"/>
<rect x="374.5" y="587.5" width="16" height="215" fill="#ccffcc" stroke="#555"/>
<rect x="374.5" y="818.5" width="16" height="154" fill="#ccffcc" stroke="#555"/>
<rect x="374.5" y="300.5" width="16" height="120" fill="#ffc896" stroke="#555"/>
<rect x="1040.5" y="994.5" width="127" height="16" fill="#ffc896" stroke="#555"/>
<path d="M1150 1011.5 H1168" stroke="#333" fill="none"/>
<rect x="622.5" y="299.5" width="24" height="30" fill="#b4bdfc" stroke="#555"/>
<rect x="875.5" y="299.5" width="24" height="30" fill="#b4bdfc" stroke="#555"/>
<rect x="1147.5" y="299.5" width="20" height="33" fill="#b4bdfc" stroke="#555"/>
<rect x="374.5" y="559.5" width="20" height="32" fill="#b4bdfc" stroke="#555"/>
<rect x="622.5" y="567.5" width="24" height="24" fill="#b4bdfc" stroke="#555"/>
<rect x="875.5" y="567.5" width="24" height="24" fill="#b4bdfc" stroke="#555"/>
<rect x="1147.5" y="556.5" width="20" height="32" fill="#b4bdfc" stroke="#555"/>
<rect x="374.5" y="787.5" width="20" height="31" fill="#b4bdfc" stroke="#555"/>
<rect x="622.5" y="795.5" width="24" height="24" fill="#b4bdfc" stroke="#555"/>
<rect x="875.5" y="795.5" width="24" height="24" fill="#b4bdfc" stroke="#555"/>
<rect x="623.5" y="991.5" width="32" height="20" fill="#b4bdfc" stroke="#555"/>
<rect x="876.5" y="991.5" width="32" height="20" fill="#b4bdfc" stroke="#555"/>
<path d="M1128.5 802.5 H1167.5 V840.5 H1150.5 V818.5 H1128.5 Z" fill="#b4bdfc" stroke="#555"/>
<path d="M374.5 972.5 H390.5 V994.5 H412.5 V1010.5 H374.5 Z" fill="#b4bdfc" stroke="#555"/>
<path d="M1136 817.5 H1248" stroke="#0000ff" fill="none"/>
<path d="M66 976.5 H1526 M402.5 172 V1018" stroke="#808080" fill="none"/></svg>
<span class="t" style="font-size:12px;color:#a8aa8c;letter-spacing:-0.056px;left:749px;top:225.84px;-webkit-text-stroke:0.12px;">S11</span>
<span class="t" style="font-size:9px;color:#a8aa8c;left:778.8px;top:228.38px;transform-origin:0 0;transform:scaleX(0.9647);-webkit-text-stroke:0.1px;">150</span>
<span class="t" style="font-size:12px;color:#a8aa8c;left:493.5px;top:431.84px;transform-origin:0 0;transform:scaleX(0.9055);-webkit-text-stroke:0.12px;">S8</span>
<span class="t" style="font-size:9px;color:#a8aa8c;left:516.3px;top:434.38px;transform-origin:0 0;transform:scaleX(0.9647);-webkit-text-stroke:0.1px;">150</span>
<span class="t" style="font-size:12px;color:#a8aa8c;left:743.5px;top:431.84px;transform-origin:0 0;transform:scaleX(0.9055);-webkit-text-stroke:0.12px;">S9</span>
<span class="t" style="font-size:9px;color:#a8aa8c;left:766.3px;top:434.38px;transform-origin:0 0;transform:scaleX(0.9647);-webkit-text-stroke:0.1px;">150</span>
<span class="t" style="font-size:12px;color:#a8aa8c;left:1000.3px;top:431.84px;transform-origin:0 0;transform:scaleX(0.9504);-webkit-text-stroke:0.12px;">S10</span>
<span class="t" style="font-size:9px;color:#a8aa8c;left:1030.1px;top:434.38px;transform-origin:0 0;transform:scaleX(0.9647);-webkit-text-stroke:0.1px;">150</span>
<span class="t" style="font-size:12px;color:#a8aa8c;left:493.7px;top:682.84px;transform-origin:0 0;transform:scaleX(0.9055);-webkit-text-stroke:0.12px;">S4</span>
<span class="t" style="font-size:9px;color:#a8aa8c;left:516.5px;top:685.38px;transform-origin:0 0;transform:scaleX(0.9647);-webkit-text-stroke:0.1px;">150</span>
<span class="t" style="font-size:12px;color:#a8aa8c;left:743.5px;top:682.84px;transform-origin:0 0;transform:scaleX(0.9055);-webkit-text-stroke:0.12px;">S5</span>
<span class="t" style="font-size:9px;color:#a8aa8c;left:766.3px;top:685.38px;transform-origin:0 0;transform:scaleX(0.9647);-webkit-text-stroke:0.1px;">150</span>
<span class="t" style="font-size:12px;color:#a8aa8c;left:1007.4px;top:682.84px;transform-origin:0 0;transform:scaleX(0.9055);-webkit-text-stroke:0.12px;">S6</span>
<span class="t" style="font-size:9px;color:#a8aa8c;left:1030.1999999999998px;top:685.38px;transform-origin:0 0;transform:scaleX(0.9647);-webkit-text-stroke:0.1px;">150</span>
<span class="t" style="font-size:12px;color:#a8aa8c;left:1193.4px;top:682.84px;transform-origin:0 0;transform:scaleX(0.9055);-webkit-text-stroke:0.12px;">S7</span>
<span class="t" style="font-size:9px;color:#a8aa8c;left:1216.2px;top:685.38px;transform-origin:0 0;transform:scaleX(0.9647);-webkit-text-stroke:0.1px;">150</span>
<span class="t" style="font-size:12px;color:#f4f4e8;left:493.7px;top:893.84px;transform-origin:0 0;transform:scaleX(0.9055);-webkit-text-stroke:0.12px;">S1</span>
<span class="t" style="font-size:9px;color:#f4f4e8;left:516.5px;top:896.38px;transform-origin:0 0;transform:scaleX(0.9647);-webkit-text-stroke:0.1px;">150</span>
<span class="t" style="font-size:12px;color:#a8aa8c;left:743.5px;top:893.84px;transform-origin:0 0;transform:scaleX(0.9055);-webkit-text-stroke:0.12px;">S2</span>
<span class="t" style="font-size:9px;color:#a8aa8c;left:766.3px;top:896.38px;transform-origin:0 0;transform:scaleX(0.9647);-webkit-text-stroke:0.1px;">150</span>
<span class="t" style="font-size:12px;color:#a8aa8c;left:1007.4px;top:893.84px;transform-origin:0 0;transform:scaleX(0.9055);-webkit-text-stroke:0.12px;">S3</span>
<span class="t" style="font-size:9px;color:#a8aa8c;left:1030.1999999999998px;top:896.38px;transform-origin:0 0;transform:scaleX(0.9647);-webkit-text-stroke:0.1px;">150</span>
<span class="t" style="font-size:12px;color:#1e8a1e;left:485.3px;top:285.84px;transform-origin:0 0;transform:scaleX(0.9504);-webkit-text-stroke:0.12px;">B10</span>
<span class="t" style="font-size:9px;color:#1e8a1e;letter-spacing:0.065px;left:515.1px;top:288.38px;-webkit-text-stroke:0.1px;">250/600</span>
<span class="t" style="font-size:12px;color:#1e8a1e;letter-spacing:-0.056px;left:743.2px;top:285.84px;-webkit-text-stroke:0.12px;">B11</span>
<span class="t" style="font-size:9px;color:#1e8a1e;letter-spacing:0.065px;left:773.0px;top:288.38px;-webkit-text-stroke:0.1px;">250/600</span>
<span class="t" style="font-size:12px;color:#1e8a1e;left:1005.1px;top:285.84px;transform-origin:0 0;transform:scaleX(0.9504);-webkit-text-stroke:0.12px;">B12</span>
<span class="t" style="font-size:9px;color:#1e8a1e;letter-spacing:0.065px;left:1034.9px;top:288.38px;-webkit-text-stroke:0.1px;">250/600</span>
<span class="t" style="font-size:12px;color:#1e8a1e;left:501.5px;top:556.84px;transform-origin:0 0;transform:scaleX(0.9055);-webkit-text-stroke:0.12px;">B7</span>
<span class="t" style="font-size:9px;color:#1e8a1e;letter-spacing:0.065px;left:524.3px;top:559.38px;-webkit-text-stroke:0.1px;">250/600</span>
<span class="t" style="font-size:12px;color:#1e8a1e;left:750px;top:556.84px;transform-origin:0 0;transform:scaleX(0.9055);-webkit-text-stroke:0.12px;">B8</span>
<span class="t" style="font-size:9px;color:#1e8a1e;letter-spacing:0.065px;left:772.8px;top:559.38px;-webkit-text-stroke:0.1px;">250/600</span>
<span class="t" style="font-size:12px;color:#1e8a1e;left:1010.4px;top:556.84px;transform-origin:0 0;transform:scaleX(0.9055);-webkit-text-stroke:0.12px;">B9</span>
<span class="t" style="font-size:9px;color:#1e8a1e;letter-spacing:0.065px;left:1033.1999999999998px;top:559.38px;-webkit-text-stroke:0.1px;">250/600</span>
<span class="t" style="font-size:12px;color:#1e8a1e;left:497.3px;top:787.84px;transform-origin:0 0;transform:scaleX(0.9055);-webkit-text-stroke:0.12px;">B4</span>
<span class="t" style="font-size:9px;color:#1e8a1e;letter-spacing:0.065px;left:520.1px;top:790.38px;-webkit-text-stroke:0.1px;">250/600</span>
<span class="t" style="font-size:12px;color:#1e8a1e;left:750.6px;top:787.84px;transform-origin:0 0;transform:scaleX(0.9055);-webkit-text-stroke:0.12px;">B5</span>
<span class="t" style="font-size:9px;color:#1e8a1e;letter-spacing:0.065px;left:773.4px;top:790.38px;-webkit-text-stroke:0.1px;">250/600</span>
<span class="t" style="font-size:12px;color:#1e8a1e;left:1011.8px;top:787.84px;transform-origin:0 0;transform:scaleX(0.9055);-webkit-text-stroke:0.12px;">B6</span>
<span class="t" style="font-size:9px;color:#1e8a1e;letter-spacing:0.065px;left:1034.6px;top:790.38px;-webkit-text-stroke:0.1px;">250/600</span>
<span class="t" style="font-size:12px;color:#1e8a1e;left:499.5px;top:979.84px;transform-origin:0 0;transform:scaleX(0.9055);-webkit-text-stroke:0.12px;">B1</span>
<span class="t" style="font-size:9px;color:#1e8a1e;letter-spacing:0.065px;left:522.3px;top:982.38px;-webkit-text-stroke:0.1px;">250/600</span>
<span class="t" style="font-size:12px;color:#1e8a1e;left:750.6px;top:979.84px;transform-origin:0 0;transform:scaleX(0.9055);-webkit-text-stroke:0.12px;">B2</span>
<span class="t" style="font-size:9px;color:#1e8a1e;letter-spacing:0.065px;left:773.4px;top:982.38px;-webkit-text-stroke:0.1px;">250/600</span>
<span class="t" style="font-size:12px;color:#1e8a1e;left:1008.3px;top:979.84px;transform-origin:0 0;transform:scaleX(0.9055);-webkit-text-stroke:0.12px;">B3</span>
<span class="t" style="font-size:9px;color:#1e8a1e;letter-spacing:0.065px;left:1031.1px;top:982.38px;-webkit-text-stroke:0.1px;">250/600</span>
<span class="t" style="font-size:12px;color:#e8702a;left:1084px;top:979.84px;-webkit-text-stroke:0.12px;">W4</span>
<span class="t" style="font-size:9px;color:#e8702a;left:1111.5px;top:982.38px;transform-origin:0 0;transform:scaleX(0.9647);-webkit-text-stroke:0.1px;">250</span>
<span class="t" style="font-size:12px;color:#2f55e8;left:608.4px;top:281.84px;transform-origin:0 0;transform:scaleX(0.9221);-webkit-text-stroke:0.12px;">C14</span>
<span class="t" style="font-size:9px;color:#2f55e8;letter-spacing:0.065px;left:638.1999999999999px;top:284.38px;-webkit-text-stroke:0.1px;">350/450</span>
<span class="t" style="font-size:12px;color:#2f55e8;left:861.6px;top:281.84px;transform-origin:0 0;transform:scaleX(0.9221);-webkit-text-stroke:0.12px;">C15</span>
<span class="t" style="font-size:9px;color:#2f55e8;letter-spacing:0.065px;left:891.4px;top:284.38px;-webkit-text-stroke:0.1px;">350/450</span>
<span class="t" style="font-size:12px;color:#2f55e8;left:1130.4px;top:281.84px;transform-origin:0 0;transform:scaleX(0.9221);-webkit-text-stroke:0.12px;">C16</span>
<span class="t" style="font-size:9px;color:#2f55e8;letter-spacing:0.065px;left:1160.2px;top:284.38px;-webkit-text-stroke:0.1px;">500/300</span>
<span class="t" style="font-size:12px;color:#2f55e8;left:364.7px;top:540.84px;transform-origin:0 0;transform:scaleX(0.8668);-webkit-text-stroke:0.12px;">C9</span>
<span class="t" style="font-size:9px;color:#2f55e8;letter-spacing:0.065px;left:387.5px;top:543.38px;-webkit-text-stroke:0.1px;">500/300</span>
<span class="t" style="font-size:12px;color:#2f55e8;left:608.6px;top:549.84px;transform-origin:0 0;transform:scaleX(0.9221);-webkit-text-stroke:0.12px;">C10</span>
<span class="t" style="font-size:9px;color:#2f55e8;letter-spacing:0.065px;left:638.4px;top:552.38px;-webkit-text-stroke:0.1px;">350/350</span>
<span class="t" style="font-size:12px;color:#2f55e8;left:861.6px;top:549.84px;transform-origin:0 0;transform:scaleX(0.9609);-webkit-text-stroke:0.12px;">C11</span>
<span class="t" style="font-size:9px;color:#2f55e8;letter-spacing:0.065px;left:891.4px;top:552.38px;-webkit-text-stroke:0.1px;">350/350</span>
<span class="t" style="font-size:12px;color:#2f55e8;left:1130.4px;top:537.84px;transform-origin:0 0;transform:scaleX(0.9221);-webkit-text-stroke:0.12px;">C12</span>
<span class="t" style="font-size:9px;color:#2f55e8;letter-spacing:0.065px;left:1160.2px;top:540.38px;-webkit-text-stroke:0.1px;">500/300</span>
<span class="t" style="font-size:12px;color:#2f55e8;left:364.4px;top:767.84px;transform-origin:0 0;transform:scaleX(0.8668);-webkit-text-stroke:0.12px;">C5</span>
<span class="t" style="font-size:9px;color:#2f55e8;letter-spacing:0.065px;left:387.2px;top:770.38px;-webkit-text-stroke:0.1px;">500/300</span>
<span class="t" style="font-size:12px;color:#2f55e8;left:616px;top:777.84px;transform-origin:0 0;transform:scaleX(0.8668);-webkit-text-stroke:0.12px;">C6</span>
<span class="t" style="font-size:9px;color:#2f55e8;letter-spacing:0.065px;left:638.8px;top:780.38px;-webkit-text-stroke:0.1px;">350/350</span>
<span class="t" style="font-size:12px;color:#2f55e8;left:868.8px;top:777.84px;transform-origin:0 0;transform:scaleX(0.8668);-webkit-text-stroke:0.12px;">C7</span>
<span class="t" style="font-size:9px;color:#2f55e8;letter-spacing:0.065px;left:891.5999999999999px;top:780.38px;-webkit-text-stroke:0.1px;">350/350</span>
<span class="t" style="font-size:12px;color:#2f55e8;left:1117.7px;top:783.84px;transform-origin:0 0;transform:scaleX(0.8668);-webkit-text-stroke:0.12px;">C8</span>
<span class="t" style="font-size:9px;color:#2f55e8;letter-spacing:0.068px;left:1140.5px;top:786.38px;-webkit-text-stroke:0.1px;">600/600/250/250</span>
<span class="t" style="font-size:12px;color:#2f55e8;left:364.4px;top:954.84px;transform-origin:0 0;transform:scaleX(0.8668);-webkit-text-stroke:0.12px;">C1</span>
<span class="t" style="font-size:9px;color:#2f55e8;letter-spacing:0.068px;left:387.2px;top:957.38px;-webkit-text-stroke:0.1px;">600/600/250/250</span>
<span class="t" style="font-size:12px;color:#2f55e8;left:620.4px;top:973.84px;transform-origin:0 0;transform:scaleX(0.8668);-webkit-text-stroke:0.12px;">C2</span>
<span class="t" style="font-size:9px;color:#2f55e8;letter-spacing:0.065px;left:643.1999999999999px;top:976.38px;-webkit-text-stroke:0.1px;">500/300</span>
<span class="t" style="font-size:12px;color:#2f55e8;left:874.1px;top:973.84px;transform-origin:0 0;transform:scaleX(0.8668);-webkit-text-stroke:0.12px;">C3</span>
<span class="t" style="font-size:9px;color:#2f55e8;letter-spacing:0.065px;left:896.9px;top:976.38px;-webkit-text-stroke:0.1px;">500/300</span>
<span class="t" style="font-size:12px;color:#1e8a1e;left:373px;top:499.5px;transform-origin:0 0;transform:rotate(-90deg) translate(0,-10.16px) scaleX(0.9504);-webkit-text-stroke:0.12px;">B15</span>
<span class="t" style="font-size:9px;color:#1e8a1e;letter-spacing:0.065px;left:373px;top:469.7px;transform-origin:0 0;transform:rotate(-90deg) translate(0,-7.62px);-webkit-text-stroke:0.1px;">250/600</span>
<span class="t" style="font-size:12px;color:#1e8a1e;left:621.5px;top:460px;transform-origin:0 0;transform:rotate(-90deg) translate(0,-10.16px) scaleX(0.9504);-webkit-text-stroke:0.12px;">B18</span>
<span class="t" style="font-size:9px;color:#1e8a1e;letter-spacing:0.065px;left:621.5px;top:430.2px;transform-origin:0 0;transform:rotate(-90deg) translate(0,-7.62px);-webkit-text-stroke:0.1px;">250/600</span>
<span class="t" style="font-size:12px;color:#1e8a1e;left:875px;top:464px;transform-origin:0 0;transform:rotate(-90deg) translate(0,-10.16px) scaleX(0.9504);-webkit-text-stroke:0.12px;">B21</span>
<span class="t" style="font-size:9px;color:#1e8a1e;letter-spacing:0.065px;left:875px;top:434.2px;transform-origin:0 0;transform:rotate(-90deg) translate(0,-7.62px);-webkit-text-stroke:0.1px;">250/600</span>
<span class="t" style="font-size:12px;color:#1e8a1e;left:1148.6px;top:458px;transform-origin:0 0;transform:rotate(-90deg) translate(0,-10.16px) scaleX(0.9504);-webkit-text-stroke:0.12px;">B24</span>
<span class="t" style="font-size:9px;color:#1e8a1e;letter-spacing:0.065px;left:1148.6px;top:428.2px;transform-origin:0 0;transform:rotate(-90deg) translate(0,-7.62px);-webkit-text-stroke:0.1px;">250/600</span>
<span class="t" style="font-size:12px;color:#1e8a1e;left:373px;top:709.2px;transform-origin:0 0;transform:rotate(-90deg) translate(0,-10.16px) scaleX(0.9504);-webkit-text-stroke:0.12px;">B14</span>
<span class="t" style="font-size:9px;color:#1e8a1e;letter-spacing:0.065px;left:373px;top:679.4000000000001px;transform-origin:0 0;transform:rotate(-90deg) translate(0,-7.62px);-webkit-text-stroke:0.1px;">250/600</span>
<span class="t" style="font-size:12px;color:#1e8a1e;left:622px;top:709.2px;transform-origin:0 0;transform:rotate(-90deg) translate(0,-10.16px) scaleX(0.9504);-webkit-text-stroke:0.12px;">B17</span>
<span class="t" style="font-size:9px;color:#1e8a1e;letter-spacing:0.065px;left:622px;top:679.4000000000001px;transform-origin:0 0;transform:rotate(-90deg) translate(0,-7.62px);-webkit-text-stroke:0.1px;">250/600</span>
<span class="t" style="font-size:12px;color:#1e8a1e;left:874px;top:709.2px;transform-origin:0 0;transform:rotate(-90deg) translate(0,-10.16px) scaleX(0.9504);-webkit-text-stroke:0.12px;">B20</span>
<span class="t" style="font-size:9px;color:#1e8a1e;letter-spacing:0.065px;left:874px;top:679.4000000000001px;transform-origin:0 0;transform:rotate(-90deg) translate(0,-7.62px);-webkit-text-stroke:0.1px;">250/600</span>
<span class="t" style="font-size:12px;color:#1e8a1e;left:1148.6px;top:709.2px;transform-origin:0 0;transform:rotate(-90deg) translate(0,-10.16px) scaleX(0.9504);-webkit-text-stroke:0.12px;">B23</span>
<span class="t" style="font-size:9px;color:#1e8a1e;letter-spacing:0.065px;left:1148.6px;top:679.4000000000001px;transform-origin:0 0;transform:rotate(-90deg) translate(0,-7.62px);-webkit-text-stroke:0.1px;">250/600</span>
<span class="t" style="font-size:12px;color:#1e8a1e;left:373px;top:919.6px;transform-origin:0 0;transform:rotate(-90deg) translate(0,-10.16px) scaleX(0.9504);-webkit-text-stroke:0.12px;">B13</span>
<span class="t" style="font-size:9px;color:#1e8a1e;letter-spacing:0.065px;left:373px;top:889.8000000000001px;transform-origin:0 0;transform:rotate(-90deg) translate(0,-7.62px);-webkit-text-stroke:0.1px;">250/600</span>
<span class="t" style="font-size:12px;color:#1e8a1e;left:622px;top:921px;transform-origin:0 0;transform:rotate(-90deg) translate(0,-10.16px) scaleX(0.9504);-webkit-text-stroke:0.12px;">B16</span>
<span class="t" style="font-size:9px;color:#1e8a1e;letter-spacing:0.065px;left:622px;top:891.2px;transform-origin:0 0;transform:rotate(-90deg) translate(0,-7.62px);-webkit-text-stroke:0.1px;">250/600</span>
<span class="t" style="font-size:12px;color:#1e8a1e;left:874px;top:921px;transform-origin:0 0;transform:rotate(-90deg) translate(0,-10.16px) scaleX(0.9504);-webkit-text-stroke:0.12px;">B19</span>
<span class="t" style="font-size:9px;color:#1e8a1e;letter-spacing:0.065px;left:874px;top:891.2px;transform-origin:0 0;transform:rotate(-90deg) translate(0,-7.62px);-webkit-text-stroke:0.1px;">250/600</span>
<span class="t" style="font-size:12px;color:#1e8a1e;left:1148.6px;top:926.3px;transform-origin:0 0;transform:rotate(-90deg) translate(0,-10.16px) scaleX(0.9504);-webkit-text-stroke:0.12px;">B22</span>
<span class="t" style="font-size:9px;color:#1e8a1e;letter-spacing:0.065px;left:1148.6px;top:896.5px;transform-origin:0 0;transform:rotate(-90deg) translate(0,-7.62px);-webkit-text-stroke:0.1px;">250/600</span>
<span class="t" style="font-size:12px;color:#e8702a;left:373px;top:384.2px;transform-origin:0 0;transform:rotate(-90deg) translate(0,-10.16px) scaleX(0.9519);">W13</span>
<span class="t" style="font-size:9px;color:#e8702a;left:373px;top:349px;transform-origin:0 0;transform:rotate(-90deg) translate(0,-7.62px) scaleX(0.9647);">250</span>
<!-- right panel -->
<div class="a" style="left:1527px;top:170px;width:392px;height:848px;background:#f0f0f0"></div>
<div class="a" style="left:1526px;top:1017px;width:393px;height:1px;background:#a0a0a0"></div>
<div class="a" style="left:1526px;top:171px;width:1px;height:846px;background:#a0a0a0"></div>
<div class="a" style="left:1527px;top:170px;width:2px;height:847px;background:#fff"></div>
<div class="a" style="left:1529px;top:170px;width:371px;height:60px;background:#fff;border:1px solid #828790;border-top:none"></div>
<div class="a" style="left:1530px;top:173px;width:369px;height:56px;overflow:hidden"><span class="t" style="font-size:11px;color:#000;left:1.8px;top:-2.31px;transform-origin:0 0;transform:scaleX(0.9660);">B16:   Με στήριξη</span><span class="t" style="font-size:11px;color:#000;left:1.8px;top:10.39px;transform-origin:0 0;transform:scaleX(0.9648);">B4:   Με στήριξη</span></div>
<div class="a" style="left:1901px;top:170px;width:17px;height:847px;background:#f0f0f0"></div>
<div class="a" style="left:1901px;top:348px;width:17px;height:652px;background:#cdcdcd"></div>
<svg style="left:1901px;top:170px" width="17" height="847" viewBox="0 0 17 847">
<path d="M4.5 14.5 L8.5 10.5 L12.5 14.5" stroke="#505050" stroke-width="2" fill="none"/>
<path d="M4.5 836.5 L8.5 840.5 L12.5 836.5" stroke="#505050" stroke-width="2" fill="none"/>
</svg>
<span class="t" style="font-size:15px;color:#000;font-weight:bold;letter-spacing:0.476px;left:1644px;top:254.30px;">Συνθήκες Στήριξης</span>
<div class="a" style="left:1529px;top:273px;width:370px;height:178px;background:#fff;border:1px solid #a0a0a0;border-top-color:#696969;border-left-color:#696969;box-shadow:inset 1px 1px 0 #a0a0a0"></div>
<svg style="left:1529px;top:273px" width="370" height="178" viewBox="1529 273 370 178">
<path d="M1634 408 V424 H1650" stroke="#1c54ea" stroke-width="2" fill="none"/>
<path d="M1634 410 V303 H1793 V424 H1648.5" stroke="#228b22" stroke-width="4" fill="none" stroke-linejoin="miter"/>
<path d="M1707.5 351.5 V376.5 M1721.5 351.5 V376.5 M1703 357 H1727 M1703 370.5 H1727" stroke="#8b1a1a" stroke-width="1.8" fill="none"/>
</svg>
<span class="t" style="font-size:11px;color:#1414e6;letter-spacing:-0.037px;left:1558.5px;top:456.99px;">Κάντε κλικ στις δοκούς για να μεταβάλεται τις συνθήκες στήριξης</span>
<span class="t" style="font-size:17px;color:#000;font-family:'Liberation Serif', serif;font-weight:bold;letter-spacing:0.035px;left:1679.4px;top:494.46px;">Οπλισμός</span>
<span class="t" style="font-size:11px;color:#000;left:1577.2px;top:520.19px;transform-origin:0 0;transform:scaleX(0.9808);">Γωνία(°) μεταξύ τοπικών X&#x27;-Y&#x27; και καθολικών αξόνων X-Y</span>
<div class="a" style="left:1853px;top:515px;width:42px;height:22px;background:#f0f0f0;border:1px solid #7a7a7a"><div class="a" style="left:1px;top:1px;width:21px;height:14px;background:#fff"></div><span class="t" style="font-size:11px;color:#000;left:1.8px;top:4.29px;">0</span><div class="a" style="left:26px;top:1px;width:12px;height:8.5px;background:#e1e1e1;border:1px solid #adadad"></div><div class="a" style="left:26px;top:10.0px;width:12px;height:8.5px;background:#e1e1e1;border:1px solid #adadad"></div><svg style="left:0;top:0" width="42" height="22"><path d="M29.0 7.0 L32.0 4.0 L35.0 7.0 Z M29.0 13.0 L32.0 16.0 L35.0 13.0 Z" fill="#000"/></svg></div>
<span class="t" style="font-size:11px;color:#000;left:1531.4px;top:545.99px;transform-origin:0 0;transform:scaleX(0.9692);">Κάτω οπλισμός ανοίγματος:</span>
<span class="t" style="font-size:11px;color:#000;letter-spacing:-0.019px;left:1583px;top:565.29px;">Κατά τον άξονα X&#x27;:</span>
<div class="a" style="left:1677px;top:560px;width:79px;height:21px;background:#e1e1e1;border:1px solid #adadad"><span class="t" style="font-size:11px;color:#000;left:4px;top:4.69px;transform-origin:0 0;transform:scaleX(0.8507);">10mm</span><svg style="left:65px;top:6.5px" width="10" height="7"><path d="M1 1.5 L5 5.5 L9 1.5" stroke="#444" stroke-width="1.1" fill="none"/></svg></div>
<span class="t" style="font-size:13.5px;color:#000;left:1773px;top:564.17px;">/</span>
<div class="a" style="left:1793px;top:560px;width:69px;height:23px;background:#f0f0f0;border:1px solid #3c3c3c"><div class="a" style="left:1px;top:1px;width:48px;height:15px;background:#fff"></div><span class="t" style="font-size:11px;color:#000;left:1.8px;top:4.79px;transform-origin:0 0;transform:scaleX(0.8816);">10</span><div class="a" style="left:53px;top:1px;width:12px;height:9.0px;background:#e1e1e1;border:1px solid #adadad"></div><div class="a" style="left:53px;top:10.5px;width:12px;height:9.0px;background:#e1e1e1;border:1px solid #adadad"></div><svg style="left:0;top:0" width="69" height="23"><path d="M56.0 7.2 L59.0 4.2 L62.0 7.2 Z M56.0 13.8 L59.0 16.8 L62.0 13.8 Z" fill="#000"/></svg></div>
<span class="t" style="font-size:11px;color:#000;left:1864.7px;top:565.29px;transform-origin:0 0;transform:scaleX(0.8520);">cm</span>
<span class="t" style="font-size:11px;color:#000;letter-spacing:-0.019px;left:1583px;top:588.79px;">Κατά τον άξονα Y&#x27;:</span>
<div class="a" style="left:1677px;top:584px;width:79px;height:21px;background:#e1e1e1;border:1px solid #adadad"><span class="t" style="font-size:11px;color:#000;left:4px;top:4.69px;transform-origin:0 0;transform:scaleX(0.8507);">10mm</span><svg style="left:65px;top:6.5px" width="10" height="7"><path d="M1 1.5 L5 5.5 L9 1.5" stroke="#444" stroke-width="1.1" fill="none"/></svg></div>
<span class="t" style="font-size:13.5px;color:#000;left:1773px;top:587.67px;">/</span>
<div class="a" style="left:1793px;top:584px;width:69px;height:23px;background:#f0f0f0;border:1px solid #3c3c3c"><div class="a" style="left:1px;top:1px;width:48px;height:15px;background:#fff"></div><span class="t" style="font-size:11px;color:#000;left:1.8px;top:4.79px;transform-origin:0 0;transform:scaleX(0.8816);">10</span><div class="a" style="left:53px;top:1px;width:12px;height:9.0px;background:#e1e1e1;border:1px solid #adadad"></div><div class="a" style="left:53px;top:10.5px;width:12px;height:9.0px;background:#e1e1e1;border:1px solid #adadad"></div><svg style="left:0;top:0" width="69" height="23"><path d="M56.0 7.2 L59.0 4.2 L62.0 7.2 Z M56.0 13.8 L59.0 16.8 L62.0 13.8 Z" fill="#000"/></svg></div>
<span class="t" style="font-size:11px;color:#000;left:1864.7px;top:588.79px;transform-origin:0 0;transform:scaleX(0.8520);">cm</span>
<span class="t" style="font-size:17px;color:#000;font-family:'Liberation Serif', serif;font-weight:bold;left:1687.4px;top:630.26px;transform-origin:0 0;transform:scaleX(0.9761);">Φορτία</span>
<span class="t" style="font-size:11px;color:#000;left:1531.4px;top:655.39px;transform-origin:0 0;transform:scaleX(0.9699);">Μόνιμα Φορτία (G, G&#x27;) και Κινητά Φορτία (Q) :</span>
<span class="t" style="font-size:11px;color:#000;left:1551.2px;top:674.69px;transform-origin:0 0;transform:scaleX(0.9284);">G (KN/m2)</span>
<div class="a" style="left:1604px;top:670px;width:75px;height:22px;background:#f0f0f0;border:1px solid #d0d0d0"><div class="a" style="left:2px;top:2px;width:54px;height:14px;background:#c8c8c8"></div><span class="t" style="font-size:11px;color:#8c8c8c;left:1.8px;top:4.29px;transform-origin:0 0;transform:scaleX(0.9710);">3,60</span><div class="a" style="left:59px;top:1px;width:12px;height:8.5px;background:#f0f0f0;border:1px solid #d8d8d8"></div><div class="a" style="left:59px;top:10.0px;width:12px;height:8.5px;background:#f0f0f0;border:1px solid #d8d8d8"></div><svg style="left:0;top:0" width="75" height="22"><path d="M62.0 7.0 L65.0 4.0 L68.0 7.0 Z M62.0 13.0 L65.0 16.0 L68.0 13.0 Z" fill="#a0a0a0"/></svg></div>
<div class="a" style="left:1689px;top:674px;width:13px;height:13px;background:#fff;border:1px solid #333"></div>
<svg style="left:1689px;top:674px" width="13" height="13"><path d="M2.5 6.5 L5 9.5 L10.5 3" stroke="#222" stroke-width="1.3" fill="none"/></svg>
<span class="t" style="font-size:11px;color:#000;left:1705px;top:675.59px;transform-origin:0 0;transform:scaleX(0.9682);">Αυτόματος Υπολογισμός</span>
<span class="t" style="font-size:11px;color:#000;left:1549.5px;top:700.49px;transform-origin:0 0;transform:scaleX(0.9240);">G&#x27; (KN/m2)</span>
<div class="a" style="left:1604px;top:696px;width:75px;height:22px;background:#f0f0f0;border:1px solid #3c3c3c"><div class="a" style="left:1px;top:1px;width:54px;height:14px;background:#fff"></div><span class="t" style="font-size:11px;color:#000;left:1.8px;top:4.29px;transform-origin:0 0;transform:scaleX(0.9710);">1,50</span><div class="a" style="left:59px;top:1px;width:12px;height:8.5px;background:#e1e1e1;border:1px solid #adadad"></div><div class="a" style="left:59px;top:10.0px;width:12px;height:8.5px;background:#e1e1e1;border:1px solid #adadad"></div><svg style="left:0;top:0" width="75" height="22"><path d="M62.0 7.0 L65.0 4.0 L68.0 7.0 Z M62.0 13.0 L65.0 16.0 L68.0 13.0 Z" fill="#000"/></svg></div>
<span class="t" style="font-size:11px;color:#000;left:1550.8px;top:726.69px;transform-origin:0 0;transform:scaleX(0.9360);">Q (KN/m2)</span>
<div class="a" style="left:1604px;top:722px;width:75px;height:22px;background:#f0f0f0;border:1px solid #3c3c3c"><div class="a" style="left:1px;top:1px;width:54px;height:14px;background:#fff"></div><span class="t" style="font-size:11px;color:#000;left:1.8px;top:4.29px;transform-origin:0 0;transform:scaleX(0.9710);">2,00</span><div class="a" style="left:59px;top:1px;width:12px;height:8.5px;background:#e1e1e1;border:1px solid #adadad"></div><div class="a" style="left:59px;top:10.0px;width:12px;height:8.5px;background:#e1e1e1;border:1px solid #adadad"></div><svg style="left:0;top:0" width="75" height="22"><path d="M62.0 7.0 L65.0 4.0 L68.0 7.0 Z M62.0 13.0 L65.0 16.0 L68.0 13.0 Z" fill="#000"/></svg></div>
<div class="a" style="left:1689px;top:722px;width:211px;height:24px;background:linear-gradient(#fff 0%,#f4f4f4 45%,#dcdcdc 100%);border:1px solid #d0d0d0;border-bottom-color:#a8a8a8;border-radius:3px"></div>
<span class="t" style="font-size:11px;color:#000;letter-spacing:0.060px;left:1721.2px;top:727.09px;">Τύπος Φορτισμένης Περιοχής</span>
<span class="t" style="font-size:11px;color:#000;left:1552.2px;top:752.69px;transform-origin:0 0;transform:scaleX(0.9310);">S (KN/m2)</span>
<div class="a" style="left:1604px;top:748px;width:75px;height:22px;background:#f0f0f0;border:1px solid #3c3c3c"><div class="a" style="left:1px;top:1px;width:54px;height:14px;background:#fff"></div><span class="t" style="font-size:11px;color:#000;left:1.8px;top:4.29px;transform-origin:0 0;transform:scaleX(0.9710);">0,00</span><div class="a" style="left:59px;top:1px;width:12px;height:8.5px;background:#e1e1e1;border:1px solid #adadad"></div><div class="a" style="left:59px;top:10.0px;width:12px;height:8.5px;background:#e1e1e1;border:1px solid #adadad"></div><svg style="left:0;top:0" width="75" height="22"><path d="M62.0 7.0 L65.0 4.0 L68.0 7.0 Z M62.0 13.0 L65.0 16.0 L68.0 13.0 Z" fill="#000"/></svg></div>
<span class="t" style="font-size:11px;color:#000;left:1692.1px;top:752.69px;transform-origin:0 0;transform:scaleX(0.9383);">(απαιτείται μόνο από ASCE 41-17 και TBDY)</span>
<span class="t" style="font-size:15px;color:#000;font-weight:bold;letter-spacing:0.188px;left:1663.2px;top:798.50px;">Κλίση Πλάκας</span>
<span class="t" style="font-size:11px;color:#000;letter-spacing:-0.050px;left:1531.9px;top:821.29px;">Ανύψωση ορόφου: 3000</span>
<div class="a" style="left:1529px;top:840px;width:13px;height:13px;background:#fff;border:1px solid #333"></div>
<svg style="left:1529px;top:840px" width="13" height="13"><path d="M2.5 6.5 L5 9.5 L10.5 3" stroke="#222" stroke-width="1.3" fill="none"/></svg>
<span class="t" style="font-size:11px;color:#000;left:1544.3px;top:840.49px;transform-origin:0 0;transform:scaleX(0.9740);">Κεκλιμένη ή ανυψωμένη πλάκα (ορισμένη από 3 σημεία)</span>
<div class="a" style="left:1665px;top:888px;width:235px;height:37px;border:1px solid #dcdcdc;background:#f0f0f0"></div>
<div class="a" style="left:1531px;top:890px;width:131px;height:35px;background:linear-gradient(#fff 0%,#f6f6f6 50%,#d8d8d8 100%);border:1px solid #c8c8c8;border-radius:2px"></div>
<span class="t" style="font-size:13px;color:#000;font-weight:bold;left:1542.3px;top:900.40px;transform-origin:0 0;transform:scaleX(0.9742);">Γραφική Επιλογή</span>
<svg style="left:1668.2px;top:904.4px" width="14" height="14"><circle cx="7" cy="7" r="6" fill="#fff" stroke="#333" stroke-width="1"/><circle cx="7" cy="7" r="3.2" fill="#333"/></svg>
<span class="t" style="font-size:11px;color:#000;left:1685px;top:906.59px;transform-origin:0 0;transform:scaleX(0.9497);">Σημείο 1</span>
<svg style="left:1744.3px;top:904.4px" width="14" height="14"><circle cx="7" cy="7" r="6" fill="#fff" stroke="#333" stroke-width="1"/></svg>
<span class="t" style="font-size:11px;color:#000;left:1761px;top:906.59px;transform-origin:0 0;transform:scaleX(0.9497);">Σημείο 2</span>
<svg style="left:1820.3px;top:904.4px" width="14" height="14"><circle cx="7" cy="7" r="6" fill="#fff" stroke="#333" stroke-width="1"/></svg>
<span class="t" style="font-size:11px;color:#000;left:1837px;top:906.59px;transform-origin:0 0;transform:scaleX(0.9497);">Σημείο 3</span>
<span class="t" style="font-size:11px;color:#000;letter-spacing:-0.058px;left:1659px;top:933.29px;">X1/Y1/Z1:</span>
<div class="a" style="left:1711px;top:929px;width:63px;height:22px;background:#ccffcc;border:1px solid #555;box-shadow:inset 1px 1px 0 #fff,inset -1px -1px 0 #fff"></div>
<span class="t" style="font-size:11px;color:#000;left:1714.4px;top:933.69px;transform-origin:0 0;transform:scaleX(0.9516);">3950</span>
<div class="a" style="left:1774px;top:929px;width:62px;height:22px;background:#ccffcc;border:1px solid #555;box-shadow:inset 1px 1px 0 #fff,inset -1px -1px 0 #fff"></div>
<span class="t" style="font-size:11px;color:#000;left:1776.7px;top:933.69px;transform-origin:0 0;transform:scaleX(0.9516);">3050</span>
<div class="a" style="left:1836px;top:929px;width:64px;height:22px;background:#ccffcc;border:1px solid #555;box-shadow:inset 1px 1px 0 #fff,inset -1px -1px 0 #fff"></div>
<span class="t" style="font-size:11px;color:#000;left:1839px;top:933.69px;transform-origin:0 0;transform:scaleX(0.9516);">3000</span>
<span class="t" style="font-size:11px;color:#000;letter-spacing:-0.058px;left:1659px;top:955.19px;">X2/Y2/Z2:</span>
<div class="a" style="left:1711px;top:951px;width:63px;height:22px;background:#fff;border:1px solid #555"></div>
<span class="t" style="font-size:11px;color:#000;left:1714.4px;top:955.59px;transform-origin:0 0;transform:scaleX(0.9260);">250</span>
<div class="a" style="left:1774px;top:951px;width:62px;height:22px;background:#fff;border:1px solid #555"></div>
<span class="t" style="font-size:11px;color:#000;left:1776.7px;top:955.59px;transform-origin:0 0;transform:scaleX(0.9260);">250</span>
<div class="a" style="left:1836px;top:951px;width:64px;height:22px;background:#fff;border:1px solid #555"></div>
<span class="t" style="font-size:11px;color:#000;left:1839px;top:955.59px;transform-origin:0 0;transform:scaleX(0.9516);">3000</span>
<span class="t" style="font-size:11px;color:#000;letter-spacing:-0.058px;left:1659px;top:977.09px;">X3/Y3/Z3:</span>
<div class="a" style="left:1711px;top:973px;width:63px;height:22px;background:#fff;border:1px solid #555"></div>
<span class="t" style="font-size:11px;color:#000;left:1714.4px;top:977.49px;transform-origin:0 0;transform:scaleX(0.9516);">3950</span>
<div class="a" style="left:1774px;top:973px;width:62px;height:22px;background:#fff;border:1px solid #555"></div>
<span class="t" style="font-size:11px;color:#000;left:1776.7px;top:977.49px;transform-origin:0 0;transform:scaleX(0.9260);">250</span>
<div class="a" style="left:1836px;top:973px;width:64px;height:22px;background:#fff;border:1px solid #555"></div>
<span class="t" style="font-size:11px;color:#000;left:1839px;top:977.49px;transform-origin:0 0;transform:scaleX(0.9516);">3000</span>
<!-- annotations -->
<div class="red" style="left:1525px;top:832px;width:299px;height:30px;border-width:3px"></div>
<div class="red" style="left:1528px;top:887px;width:137px;height:41px;border-width:3px"></div>
<div class="red" style="left:1665px;top:895px;width:68px;height:29px;border-width:3px"></div>
<div class="red" style="left:1835px;top:927px;width:66px;height:26px;border-width:3px"></div>
<div class="red" style="left:378px;top:952px;width:50px;height:45px;border-width:3px"></div>
<span class="t" style="font-size:19px;color:#800000;font-weight:bold;left:1502px;top:838.42px;transform-origin:0 0;transform:scaleX(0.8);">1</span>
<span class="t" style="font-size:19px;color:#800000;font-weight:bold;left:1582.5px;top:864.42px;transform-origin:0 0;transform:scaleX(0.8);">3</span>
<span class="t" style="font-size:19px;color:#800000;font-weight:bold;left:1697px;top:866.12px;transform-origin:0 0;transform:scaleX(0.8);">2</span>
<span class="t" style="font-size:19px;color:#800000;font-weight:bold;left:1881.4px;top:894.92px;transform-origin:0 0;transform:scaleX(0.8);">5</span>
<span class="t" style="font-size:19px;color:#800000;font-weight:bold;left:352.6px;top:945.92px;transform-origin:0 0;transform:scaleX(0.8);">4</span>
<svg style="left:394px;top:968px" width="17" height="17" viewBox="0 0 17 17" shape-rendering="crispEdges">
<path d="M8.5 0 V5 M8.5 12 V17 M0 8.5 H5 M12 8.5 H17" stroke="#fff" stroke-width="3" fill="none"/>
<path d="M8.5 0 V5 M8.5 12 V17 M0 8.5 H5 M12 8.5 H17" stroke="#000" stroke-width="1" fill="none"/>
<rect x="5.5" y="5.5" width="6" height="6" fill="#8c8c78" stroke="#000" stroke-width="1"/><rect x="6.5" y="6.5" width="4" height="4" fill="none" stroke="#fff" stroke-width="0.6" stroke-dasharray="1 1"/>
</svg>
</body></html>
